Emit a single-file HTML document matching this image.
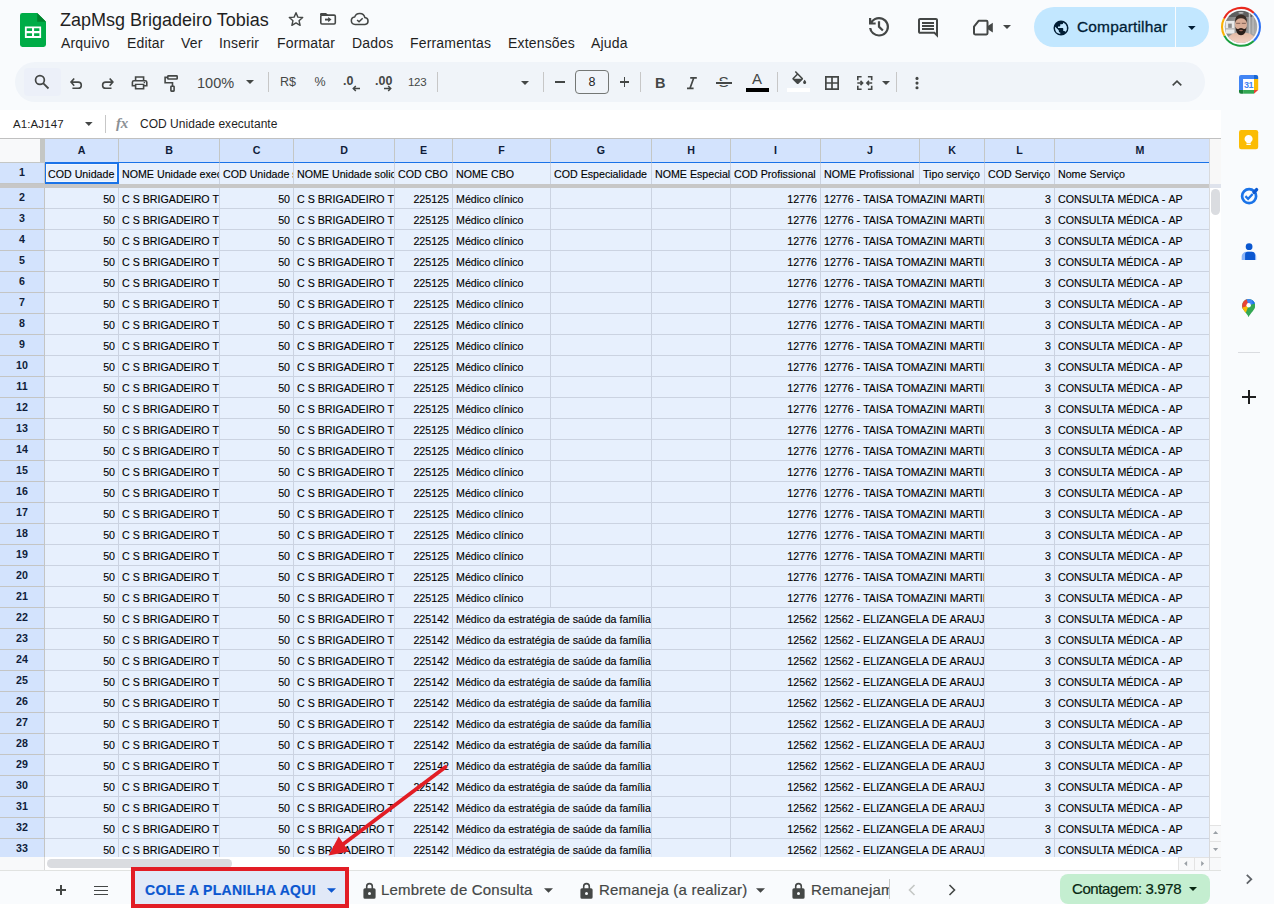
<!DOCTYPE html>
<html lang="pt-BR"><head><meta charset="utf-8"><title>ZapMsg Brigadeiro Tobias</title>
<style>
*{box-sizing:border-box;margin:0;padding:0}
html,body{width:1274px;height:908px;overflow:hidden;background:#f9fbfd;
  font-family:"Liberation Sans",sans-serif;color:#1f1f1f}
#app{position:relative;width:1274px;height:908px;overflow:hidden;background:#f9fbfd}
.abs{position:absolute}
svg{position:absolute;overflow:visible}
/* ---------- title / menu ---------- */
#title{position:absolute;left:60px;top:8px;font-size:18px;line-height:24px;color:#1f1f1f;white-space:nowrap;letter-spacing:0}
.menu{position:absolute;top:33px;font-size:14px;line-height:20px;color:#1f1f1f;white-space:nowrap;letter-spacing:0.17px}
/* ---------- toolbar ---------- */
#tb{position:absolute;left:15px;top:62px;width:1190px;height:40px;border-radius:20px;background:#f0f4f9}
#tbsearch{position:absolute;left:24px;top:68px;width:37px;height:28px;background:#ecf0f9;border-radius:4px}
.sep{position:absolute;top:72px;width:1px;height:20px;background:#c7c7c7}
.tbt{position:absolute;font-size:14px;color:#444746;white-space:nowrap;line-height:20px}
/* ---------- formula bar ---------- */
#fb{position:absolute;left:0;top:110px;width:1221px;height:29px;background:#fff}
/* ---------- grid ---------- */
#gridbg{position:absolute;left:0;top:139px;width:1221px;height:731px;background:#fff}
#sel{position:absolute;left:45px;top:163px;width:1164px;height:694px;background:#e7f0fd}
.ch{position:absolute;top:139px;height:24px;background:#d3e3fd;border-right:1px solid #c4c7c5;border-bottom:1px solid #1a73e8;
  font-size:10.67px;font-weight:bold;text-align:center;line-height:23px;color:#0f1d3a}
.rh{position:absolute;left:0;width:45px;background:#d3e3fd;border-right:1px solid #c4c5c4;border-bottom:1px solid #c4c5c4;
  font-size:10.67px;font-weight:bold;text-align:center;line-height:19px;color:#0f1d3a}
.c{position:absolute;overflow:hidden;white-space:nowrap;font-size:10.67px;line-height:21px;padding:1px 3px 0 3px;color:#000;-webkit-text-stroke:0.12px #000}
.c.r{text-align:right}
.s{font-kerning:none}
.hl{position:absolute;left:45px;width:1164px;height:1px;background:#cbd3e1}
.vl{position:absolute;width:1px;background:#cbd3e1}
/* ---------- bottom bar ---------- */
#bb{position:absolute;left:0;top:870px;width:1221px;height:38px;background:#f9fbfd;border-top:1px solid #e1e3e1}
.tab{position:absolute;top:880px;font-size:15px;line-height:20px;color:#444746;white-space:nowrap;letter-spacing:0.2px;-webkit-text-stroke:0.2px currentColor}
</style></head><body><div id="app">
<!-- ===== Sheets logo ===== -->
<svg style="left:20px;top:13px" width="26" height="34" viewBox="0 0 26 34">
  <path d="M2.400 0H17.200L26 8.800V31.600A2.400 2.400 0 0 1 23.600 34H2.400A2.400 2.400 0 0 1 0 31.600V2.400A2.400 2.400 0 0 1 2.400 0Z" fill="#00ac47"/>
  <path d="M17.200 0L26 8.800H17.200Z" fill="#00832d"/>
  <path d="M4.900 13.400H21.100V25H4.900Z M6.700 15.200V17.900H12V15.200Z M14.100 15.200V17.900H19.400V15.200Z M6.700 20.300V22.900H12V20.300Z M14.100 20.300V22.900H19.400V20.300Z" fill="#fff" fill-rule="evenodd"/>
</svg>

<!-- ===== title + doc icons ===== -->
<div id="title">ZapMsg Brigadeiro Tobias</div>
<!-- star -->
<svg style="left:287px;top:10px" width="18" height="18" viewBox="0 0 24 24"><path d="M12 3.600l2.500 5.900 6.400.55-4.850 4.200 1.450 6.250L12 17.200 6.500 20.500l1.450-6.250L3.100 10.050l6.400-.55z" fill="none" stroke="#444746" stroke-width="1.900" stroke-linejoin="round"/></svg>
<!-- move to folder -->
<svg style="left:318px;top:10px" width="20" height="17" viewBox="318 10 20 17"><rect x="320.800" y="15.100" width="14.500" height="8.900" rx="1.200" fill="none" stroke="#444746" stroke-width="1.600"/><path d="M320 15.300V14.300a1.200 1.200 0 0 1 1.200-1.200h4.600a1.200 1.200 0 0 1 .9.400l1.600 1.800z" fill="#444746"/><path d="M325 19.600h4" stroke="#444746" stroke-width="1.900"/><path d="M328.200 16.900l3.300 2.700-3.300 2.700z" fill="#444746"/></svg>
<!-- cloud done -->
<svg style="left:350.300px;top:12px" width="19.500" height="13.500" viewBox="0 0 28 20" preserveAspectRatio="none"><path d="M7.500 18.500a5.500 5.500 0 0 1-.8-10.950A7.500 7.500 0 0 1 21.300 8.200 5.200 5.200 0 0 1 21.500 18.500z" fill="none" stroke="#444746" stroke-width="2.200" stroke-linejoin="round"/><path d="M10.200 11.800l2.800 2.700 5.200-5.200" fill="none" stroke="#444746" stroke-width="2.200"/></svg>

<!-- ===== menus ===== -->
<div class="menu" style="left:61px">Arquivo</div>
<div class="menu" style="left:127px">Editar</div>
<div class="menu" style="left:181px">Ver</div>
<div class="menu" style="left:219px">Inserir</div>
<div class="menu" style="left:277px">Formatar</div>
<div class="menu" style="left:352px">Dados</div>
<div class="menu" style="left:410px">Ferramentas</div>
<div class="menu" style="left:508px">Extensões</div>
<div class="menu" style="left:591px">Ajuda</div>

<!-- ===== right-side actions ===== -->
<!-- history -->
<svg style="left:868.900px;top:17px" width="20" height="19.600" viewBox="120 -840 720 720" preserveAspectRatio="none"><path d="M480-120q-138 0-240.500-91.500T122-440h82q14 104 92.500 172T480-200q117 0 198.500-81.500T760-480q0-117-81.500-198.500T480-760q-69 0-129 32t-101 88h110v80H120v-240h80v94q51-64 124.500-99T480-840q75 0 140.500 28.500t114 77q48.500 48.500 77 114T840-480q0 75-28.500 140.500t-77 114q-48.500 48.500-114 77T480-120Zm112-192L440-464v-216h80v184l128 128-56 56Z" fill="#444746"/></svg>
<!-- comment -->
<svg style="left:918.200px;top:18px" width="20" height="19.800" viewBox="80 -880 800 800" preserveAspectRatio="none"><path d="M240-400h480v-80H240v80Zm0-120h480v-80H240v80Zm0-120h480v-80H240v80ZM880-80 720-240H160q-33 0-56.500-23.500T80-320v-480q0-33 23.500-56.500T160-880h640q33 0 56.500 23.500T880-800v720ZM160-320h594l46 45v-525H160v480Zm0 0v-480 480Z" fill="#444746"/></svg>
<!-- video -->
<svg style="left:0;top:0" width="1274" height="60" viewBox="0 0 1274 60"><path d="M978.600 20.800H986.400Q987.500 20.800 987.500 21.900V33.300Q987.500 34.400 986.400 34.400H975.100Q974 34.400 974 33.300V26.600Z" fill="none" stroke="#444746" stroke-width="2" stroke-linejoin="round"/><path d="M987.800 26L992.800 22.700V32.500L987.800 29.200Z" fill="#444746"/></svg>
<svg style="left:1003px;top:25px" width="8" height="4" viewBox="0 0 10 5"><path d="M0 0h10L5 5z" fill="#444746"/></svg>

<!-- share button -->
<div class="abs" style="left:1034px;top:7px;width:175px;height:40px;border-radius:20px;background:#c2e7ff"></div>
<div class="abs" style="left:1175px;top:7px;width:1px;height:40px;background:#f9fbfd"></div>
<svg style="left:1051.700px;top:18.700px" width="18" height="18" viewBox="0 0 24 24"><path d="M12 2a10 10 0 1 0 0 20 10 10 0 0 0 0-20zm-1 17.930A8 8 0 0 1 4 12c0-.620.080-1.210.210-1.790L9 15v1a2 2 0 0 0 2 2v1.930zm6.900-2.540A2 2 0 0 0 16 16h-1v-3a1 1 0 0 0-1-1H8v-2h2a1 1 0 0 0 1-1V7h2a2 2 0 0 0 2-2v-.410a7.990 7.990 0 0 1 2.900 12.800z" fill="#001d35"/></svg>
<div class="abs" style="left:1077px;top:17px;font-size:15.500px;line-height:20px;color:#001d35;white-space:nowrap;letter-spacing:0.150px;-webkit-text-stroke:0.300px #001d35">Compartilhar</div>
<svg style="left:1188.200px;top:26px" width="7.600" height="4" viewBox="0 0 10 5"><path d="M0 0h10L5 5z" fill="#001d35"/></svg>

<!-- avatar -->
<svg style="left:1210px;top:0" width="64" height="55" viewBox="0 0 1057 908">
  <defs>
    <clipPath id="avc"><circle cx="512.500" cy="443.500" r="268"/></clipPath>
    <linearGradient id="avbg" x1="0" y1="0" x2="1" y2="0.300"><stop offset="0" stop-color="#6e6e6e"/><stop offset="0.450" stop-color="#9a9a9a"/><stop offset="0.700" stop-color="#8d8d8d"/><stop offset="1" stop-color="#a9a9a9"/></linearGradient>
    <linearGradient id="avsk" x1="0" y1="0" x2="0" y2="1"><stop offset="0" stop-color="#e3b9a4"/><stop offset="1" stop-color="#f3d3c4"/></linearGradient>
  </defs>
  <g fill="none" stroke-width="34">
    <path d="M230.9 308.0A312.5 312.5 0 0 1 724.8 214.2" stroke="#e8281d"/>
    <path d="M724.8 214.2A312.5 312.5 0 0 1 721.6 675.7" stroke="#2d70f3"/>
    <path d="M721.6 675.7A312.5 312.5 0 0 1 235.3 587.8" stroke="#1a9f3f"/>
    <path d="M235.3 587.8A312.5 312.5 0 0 1 230.9 308.0" stroke="#fbb004"/>
  </g>
  <g clip-path="url(#avc)">
    <rect x="230" y="170" width="570" height="550" fill="url(#avbg)"/>
    <rect x="230" y="170" width="570" height="110" fill="#4a4a4a" opacity="0.700"/>
    <rect x="255" y="345" width="150" height="210" fill="#e9e9e9"/>
    <rect x="300" y="390" width="60" height="70" fill="#8c8c8c"/>
    <rect x="255" y="470" width="150" height="14" fill="#9a9a9a"/>
    <rect x="640" y="200" width="26" height="360" fill="#c4c4c4"/>
    <rect x="700" y="230" width="22" height="330" fill="#bdbdbd"/>
    <ellipse cx="512" cy="212" rx="45" ry="16" fill="#d8d8d8" opacity="0.800"/>
    <path d="M250 720Q300 560 430 540H600Q740 560 790 720Z" fill="url(#avsk)"/>
    <ellipse cx="512" cy="400" rx="98" ry="150" fill="#d9ad97"/>
    <path d="M412 380Q405 245 512 240Q620 245 612 380Q590 300 512 300Q434 300 412 380Z" fill="#3a2c25"/>
    <path d="M420 440Q430 580 512 582Q594 580 604 440Q585 500 545 470Q512 455 480 470Q440 500 420 440Z" fill="#2a1e19"/>
    <path d="M432 385H500M525 385H592" stroke="#5a4038" stroke-width="12" fill="none"/>
    <ellipse cx="512" cy="505" rx="32" ry="12" fill="#a06a5c"/>
  </g>
</svg>

<!-- ===== toolbar ===== -->
<div id="tb"></div>
<div id="tbsearch"></div>
<!-- search -->
<svg style="left:30px;top:70px" width="22" height="22" viewBox="30 70 22 22"><circle cx="39.950" cy="80" r="4.400" fill="none" stroke="#444746" stroke-width="1.700"/><path d="M43.100 83.200L48.500 88.500" stroke="#444746" stroke-width="1.800"/></svg>
<!-- undo / redo / paint format (page coords) -->
<svg style="left:0;top:0" width="1274" height="120" viewBox="0 0 1274 120">
  <g fill="none" stroke="#444746" stroke-width="1.600">
    <path d="M74.200 78.500L71 82.100L74.200 85.700M71.500 82.100H78.200A3.100 3.100 0 0 1 78.200 88.300H72.400"/>
    <path d="M109.700 78.500L112.900 82.100L109.700 85.700M112.400 82.100H105.700A3.100 3.100 0 0 0 105.700 88.300H111.500"/>
    <rect x="167.800" y="75.900" width="9.400" height="3.100" rx="0.600"/>
    <path d="M167.800 77.400H165.100V82.800H172.500V86"/>
    <rect x="170.900" y="86.300" width="3.200" height="4.800" rx="0.500"/>
  </g>
</svg>
<!-- print -->
<svg style="left:130.300px;top:74px" width="19.200" height="17.800" viewBox="0 0 24 24" preserveAspectRatio="none"><path d="M19 8h-1V3H6v5H5a3 3 0 0 0-3 3v6h4v4h12v-4h4v-6a3 3 0 0 0-3-3zM8 5h8v3H8V5zm8 14H8v-4h8v4zm2-4v-2H6v2H4v-4a1 1 0 0 1 1-1h14a1 1 0 0 1 1 1v4h-2z" fill="#444746"/><circle cx="18" cy="11.500" r="1" fill="#444746"/></svg>
<div class="tbt" style="left:197px;top:73px;font-size:14.500px">100%</div>
<svg style="left:246px;top:80px" width="8" height="4" viewBox="0 0 10 5"><path d="M0 0h10L5 5z" fill="#444746"/></svg>
<div class="sep" style="left:268px"></div>
<div class="tbt" style="left:280px;top:72px;font-size:12.500px">R$</div>
<div class="tbt" style="left:314.500px;top:72px;font-size:12.500px">%</div>
<div class="tbt" style="left:343px;top:70.500px;font-size:12.500px;font-weight:bold">.0</div>
<svg style="left:352px;top:84.500px" width="8" height="7" viewBox="0 0 8 7"><path d="M8 3.500H1.500M3.800 1L1.300 3.500 3.800 6" fill="none" stroke="#444746" stroke-width="1.500"/></svg>
<div class="tbt" style="left:375px;top:70.500px;font-size:12.500px;font-weight:bold">.00</div>
<svg style="left:384px;top:84.500px" width="8" height="7" viewBox="0 0 8 7"><path d="M0 3.500h6.500M4.200 1l2.500 2.500L4.200 6" fill="none" stroke="#444746" stroke-width="1.500"/></svg>
<div class="tbt" style="left:408px;top:71.500px;font-size:11.500px;letter-spacing:-0.300px">123</div>
<div class="sep" style="left:437px"></div>
<svg style="left:520.500px;top:80.500px" width="8" height="4" viewBox="0 0 10 5"><path d="M0 0h10L5 5z" fill="#444746"/></svg>
<div class="sep" style="left:543px"></div>
<div class="abs" style="left:555.300px;top:81.300px;width:9.600px;height:1.500px;background:#444746"></div>
<div class="abs" style="left:575px;top:70px;width:34px;height:24px;border:1px solid #747775;border-radius:4px;text-align:center;font-size:12.500px;line-height:22px;color:#1f1f1f">8</div>
<div class="abs" style="left:619.500px;top:81.300px;width:9.600px;height:1.500px;background:#444746"></div>
<div class="abs" style="left:623.550px;top:77.250px;width:1.500px;height:9.600px;background:#444746"></div>
<div class="sep" style="left:640px"></div>
<div class="tbt" style="left:655px;top:72.500px;font-size:14.500px;font-weight:bold">B</div>
<svg style="left:686px;top:76px" width="12" height="14" viewBox="686 76 12 14"><path d="M690.200 77.800H696.800M687 88.300H693.600M693.800 77.800L690 88.300" fill="none" stroke="#444746" stroke-width="1.700"/></svg>
<!-- strikethrough S -->
<div class="tbt" style="left:718.600px;top:71.500px;font-size:15.500px">S</div>
<div class="abs" style="left:716px;top:82px;width:16px;height:1.500px;background:#444746;box-shadow:0 -1px 0 #f0f4f9,0 1px 0 #f0f4f9"></div>
<!-- text colour -->
<div class="tbt" style="left:752px;top:69px;font-size:15px">A</div>
<div class="abs" style="left:746px;top:88px;width:23px;height:4px;background:#000"></div>
<div class="sep" style="left:777px"></div>
<!-- fill colour -->
<svg style="left:789.500px;top:71px" width="18.500" height="18.500" viewBox="0 0 24 24"><path d="M16.560 8.940L7.620 0 6.210 1.410l2.380 2.380-5.150 5.150a1.490 1.490 0 0 0 0 2.120l5.500 5.500c.290.290.680.440 1.060.440s.770-.150 1.060-.440l5.500-5.500c.590-.580.590-1.530 0-2.120zM5.210 10L10 5.210 14.790 10H5.210zM19 11.500s-2 2.170-2 3.500c0 1.100.9 2 2 2s2-.900 2-2c0-1.330-2-3.500-2-3.500z" fill="#444746"/></svg>
<div class="abs" style="left:787px;top:88px;width:23px;height:4px;background:#fff"></div>
<!-- borders -->
<svg style="left:825px;top:76px" width="14" height="14" viewBox="0 0 14 14"><path d="M.85 .85h12.300v12.300H.85zM7 .85v12.300M.85 7h12.300" fill="none" stroke="#444746" stroke-width="1.700"/></svg>
<!-- merge -->
<svg style="left:857px;top:76px" width="15.500" height="14" viewBox="0 0 15.500 14"><path d="M.8 4.200V.8H4.600M10.900 .8h3.800V4.200M.8 9.800v3.400H4.600M10.900 13.200h3.800V9.800" fill="none" stroke="#444746" stroke-width="1.600"/><path d="M.3 7h5.200M3.500 4.900L5.600 7 3.500 9.100M15.200 7H10M12 4.900L9.900 7 12 9.100" fill="none" stroke="#444746" stroke-width="1.600"/></svg>
<svg style="left:882.200px;top:81px" width="8" height="4" viewBox="0 0 10 5"><path d="M0 0h10L5 5z" fill="#444746"/></svg>
<div class="sep" style="left:896px"></div>
<!-- more -->
<svg style="left:915px;top:74px" width="4" height="18" viewBox="0 0 4 18"><circle cx="2" cy="4.400" r="1.550" fill="#444746"/><circle cx="2" cy="9.100" r="1.550" fill="#444746"/><circle cx="2" cy="13.800" r="1.550" fill="#444746"/></svg>
<!-- collapse caret -->
<svg style="left:1171px;top:79px" width="12" height="8" viewBox="0 0 12 8"><path d="M1.700 6.400l4.300-4.300 4.300 4.300" fill="none" stroke="#444746" stroke-width="1.600"/></svg>

<!-- ===== side panel icons ===== -->
<!-- calendar -->
<svg style="left:1239.100px;top:74.600px" width="19.200" height="18.700" viewBox="0 0 19.200 18.700">
  <path d="M0 4V2A2 2 0 0 1 2 0H15V4Z" fill="#4285f4"/>
  <path d="M15 0H17.200A2 2 0 0 1 19.200 2V4H15Z" fill="#1967d2"/>
  <rect x="0" y="4" width="4.200" height="11" fill="#4285f4"/>
  <rect x="15" y="4" width="4.200" height="11" fill="#fbbc04"/>
  <rect x="4.200" y="15" width="10.800" height="3.700" fill="#34a853"/>
  <path d="M0 15H4.200V18.700H2A2 2 0 0 1 0 16.700Z" fill="#188038"/>
  <path d="M15 15H19.200L15 18.700Z" fill="#ea4335"/>
  <rect x="4.200" y="4" width="10.800" height="11" fill="#fff"/>
  <text x="9.600" y="12.700" font-family="Liberation Sans, sans-serif" font-size="9" font-weight="bold" fill="#4285f4" text-anchor="middle" letter-spacing="-0.400">31</text>
</svg>
<!-- keep -->
<svg style="left:1239.300px;top:130.300px" width="19.200" height="19.200" viewBox="0 0 19.200 19.200">
  <rect x="0" y="0" width="19.200" height="19.200" rx="2.200" fill="#fbbc04"/>
  <path d="M9.600 4.900a4 4 0 0 0-2.100 7.400v0.900h4.200v-0.900A4 4 0 0 0 9.600 4.900z" fill="#fff"/>
  <rect x="7.400" y="13.800" width="4.400" height="1.300" rx="0.300" fill="#fff"/>
</svg>
<!-- tasks -->
<svg style="left:1239px;top:186px" width="22" height="20" viewBox="1239 186 22 20">
  <circle cx="1249.100" cy="196.200" r="7" fill="none" stroke="#1a73e8" stroke-width="2.700"/>
  <path d="M1245.400 196.200l2.700 2.600 4.600-4.800" fill="none" stroke="#1a73e8" stroke-width="2.300"/>
  <path d="M1254 192.300l2.600-2.700" stroke="#0b57d0" stroke-width="3.400" stroke-linecap="round"/>
</svg>
<!-- contacts -->
<svg style="left:1240px;top:242px" width="18" height="19" viewBox="1240 242 18 19">
  <circle cx="1249.100" cy="246.700" r="3.400" fill="#0b57d0"/>
  <path d="M1241.700 259.900V256.600A4.800 4.800 0 0 1 1246.500 251.800H1251.600A4.600 4.600 0 0 1 1256.200 256.400V259.900Z" fill="#8ab4f8"/>
  <path d="M1245.100 259.900V254.500A2.700 2.700 0 0 1 1247.800 251.800H1251.600A3.400 3.400 0 0 1 1255 255.200V259.900Z" fill="#0b57d0"/>
</svg>
<!-- maps -->
<svg style="left:1242.400px;top:298.800px" width="13.300" height="18.200" viewBox="0 0 16 22">
  <defs><clipPath id="pin"><path d="M8 0a8 8 0 0 0-8 8c0 5.500 6 9 8 14 2-5 8-8.500 8-14a8 8 0 0 0-8-8z"/></clipPath></defs>
  <g clip-path="url(#pin)">
    <rect x="0" y="0" width="16" height="22" fill="#34a853"/>
    <path d="M0 0h16v5L8 8 3 0z" fill="#4285f4"/>
    <path d="M0 0h5.500L8 8 0 13z" fill="#ea4335"/>
    <path d="M0 10.500L8 8l-3.500 9L0 14z" fill="#fbbc04"/>
    <path d="M12 0h4v5l-3 1.500z" fill="#1a73e8"/>
  </g>
  <circle cx="8" cy="7.600" r="2.700" fill="#fff"/>
</svg>
<div class="abs" style="left:1238px;top:352px;width:22px;height:1px;background:#dadce0"></div>
<!-- plus -->
<div class="abs" style="left:1242px;top:396px;width:14px;height:2px;background:#1f1f1f"></div>
<div class="abs" style="left:1248px;top:390px;width:2px;height:14px;background:#1f1f1f"></div>
<!-- side panel chevron -->
<svg style="left:1244px;top:872px" width="10" height="14" viewBox="0 0 10 14"><path d="M2.800 2.800l4.500 4.400L2.800 11.600" fill="none" stroke="#5f6368" stroke-width="1.800"/></svg>

<!-- ===== formula bar ===== -->
<div id="fb"></div>
<div class="abs" style="left:13px;top:114px;font-size:11.500px;line-height:20px;color:#1f1f1f;letter-spacing:0.100px">A1:AJ147</div>
<svg style="left:85.300px;top:122px" width="7.600" height="4" viewBox="0 0 10 5"><path d="M0 0h10L5 5z" fill="#444746"/></svg>
<div class="abs" style="left:105px;top:115px;width:1px;height:18px;background:#c7c7c7"></div>
<div class="abs" style="left:116px;top:113px;font-size:15px;line-height:20px;color:#8b9095;font-style:italic;font-weight:bold;font-family:'Liberation Serif',serif;letter-spacing:-0.300px">fx</div>
<div class="abs" style="left:140px;top:114px;font-size:12px;line-height:20px;color:#1f1f1f;white-space:nowrap;letter-spacing:0.030px">COD Unidade executante</div>

<div id="gridbg"></div><div id="sel"></div>
<div class="ch" style="left:45px;width:74px">A</div>
<div class="ch" style="left:119px;width:101px">B</div>
<div class="ch" style="left:220px;width:74px">C</div>
<div class="ch" style="left:294px;width:101px">D</div>
<div class="ch" style="left:395px;width:58px">E</div>
<div class="ch" style="left:453px;width:98px">F</div>
<div class="ch" style="left:551px;width:101px">G</div>
<div class="ch" style="left:652px;width:79px">H</div>
<div class="ch" style="left:731px;width:90px">I</div>
<div class="ch" style="left:821px;width:99px">J</div>
<div class="ch" style="left:920px;width:65px">K</div>
<div class="ch" style="left:985px;width:70px">L</div>
<div class="ch" style="left:1055px;width:155px;padding-left:16px">M</div>
<div class="c" style="left:45px;top:163px;width:73px;height:21px">COD Unidade executante</div>
<div class="c" style="left:119px;top:163px;width:100px;height:21px">NOME Unidade executante</div>
<div class="c" style="left:220px;top:163px;width:73px;height:21px">COD Unidade solicitante</div>
<div class="c" style="left:294px;top:163px;width:100px;height:21px">NOME Unidade solicitante</div>
<div class="c" style="left:395px;top:163px;width:57px;height:21px">COD CBO</div>
<div class="c" style="left:453px;top:163px;width:97px;height:21px">NOME CBO</div>
<div class="c" style="left:551px;top:163px;width:100px;height:21px">COD Especialidade</div>
<div class="c" style="left:652px;top:163px;width:78px;height:21px">NOME Especialidade</div>
<div class="c" style="left:731px;top:163px;width:89px;height:21px">COD Profissional</div>
<div class="c" style="left:821px;top:163px;width:98px;height:21px">NOME Profissional</div>
<div class="c" style="left:920px;top:163px;width:64px;height:21px">Tipo serviço</div>
<div class="c" style="left:985px;top:163px;width:69px;height:21px">COD Serviço</div>
<div class="c" style="left:1055px;top:163px;width:154px;height:21px">Nome Serviço</div>
<div class="vl" style="left:118px;top:163px;height:21px"></div>
<div class="vl" style="left:219px;top:163px;height:21px"></div>
<div class="vl" style="left:293px;top:163px;height:21px"></div>
<div class="vl" style="left:394px;top:163px;height:21px"></div>
<div class="vl" style="left:452px;top:163px;height:21px"></div>
<div class="vl" style="left:550px;top:163px;height:21px"></div>
<div class="vl" style="left:651px;top:163px;height:21px"></div>
<div class="vl" style="left:730px;top:163px;height:21px"></div>
<div class="vl" style="left:820px;top:163px;height:21px"></div>
<div class="vl" style="left:919px;top:163px;height:21px"></div>
<div class="vl" style="left:984px;top:163px;height:21px"></div>
<div class="vl" style="left:1054px;top:163px;height:21px"></div>
<div class="vl" style="left:1209px;top:163px;height:21px"></div>
<div class="rh" style="top:163px;height:21px">1</div>
<div class="rh" style="top:188px;height:21px">2</div>
<div class="c r" style="left:45px;top:188px;width:73px;height:21px">50</div>
<div class="c" style="left:119px;top:188px;width:100px;height:21px">C S BRIGADEIRO<span class="s"> </span>TOBIAS</div>
<div class="c r" style="left:220px;top:188px;width:73px;height:21px">50</div>
<div class="c" style="left:294px;top:188px;width:100px;height:21px">C S BRIGADEIRO<span class="s"> </span>TOBIAS</div>
<div class="c r" style="left:395px;top:188px;width:57px;height:21px">225125</div>
<div class="c" style="left:453px;top:188px;width:97px;height:21px">Médico clínico</div>
<div class="c r" style="left:731px;top:188px;width:89px;height:21px">12776</div>
<div class="c" style="left:821px;top:188px;width:163px;height:21px">12776 -<span class="s"> </span>TAISA<span class="s"> </span>TOMAZINI MARTINS</div>
<div class="c r" style="left:985px;top:188px;width:69px;height:21px">3</div>
<div class="c" style="left:1055px;top:188px;width:154px;height:21px">CONSULTA<span class="s"> </span>MÉDICA<span class="s"> </span>-<span class="s"> </span>AP</div>
<div class="hl" style="top:208px"></div>
<div class="vl" style="left:118px;top:188px;height:21px"></div>
<div class="vl" style="left:219px;top:188px;height:21px"></div>
<div class="vl" style="left:293px;top:188px;height:21px"></div>
<div class="vl" style="left:394px;top:188px;height:21px"></div>
<div class="vl" style="left:452px;top:188px;height:21px"></div>
<div class="vl" style="left:550px;top:188px;height:21px"></div>
<div class="vl" style="left:651px;top:188px;height:21px"></div>
<div class="vl" style="left:730px;top:188px;height:21px"></div>
<div class="vl" style="left:820px;top:188px;height:21px"></div>
<div class="vl" style="left:984px;top:188px;height:21px"></div>
<div class="vl" style="left:1054px;top:188px;height:21px"></div>
<div class="vl" style="left:1209px;top:188px;height:21px"></div>
<div class="rh" style="top:209px;height:21px">3</div>
<div class="c r" style="left:45px;top:209px;width:73px;height:21px">50</div>
<div class="c" style="left:119px;top:209px;width:100px;height:21px">C S BRIGADEIRO<span class="s"> </span>TOBIAS</div>
<div class="c r" style="left:220px;top:209px;width:73px;height:21px">50</div>
<div class="c" style="left:294px;top:209px;width:100px;height:21px">C S BRIGADEIRO<span class="s"> </span>TOBIAS</div>
<div class="c r" style="left:395px;top:209px;width:57px;height:21px">225125</div>
<div class="c" style="left:453px;top:209px;width:97px;height:21px">Médico clínico</div>
<div class="c r" style="left:731px;top:209px;width:89px;height:21px">12776</div>
<div class="c" style="left:821px;top:209px;width:163px;height:21px">12776 -<span class="s"> </span>TAISA<span class="s"> </span>TOMAZINI MARTINS</div>
<div class="c r" style="left:985px;top:209px;width:69px;height:21px">3</div>
<div class="c" style="left:1055px;top:209px;width:154px;height:21px">CONSULTA<span class="s"> </span>MÉDICA<span class="s"> </span>-<span class="s"> </span>AP</div>
<div class="hl" style="top:229px"></div>
<div class="vl" style="left:118px;top:209px;height:21px"></div>
<div class="vl" style="left:219px;top:209px;height:21px"></div>
<div class="vl" style="left:293px;top:209px;height:21px"></div>
<div class="vl" style="left:394px;top:209px;height:21px"></div>
<div class="vl" style="left:452px;top:209px;height:21px"></div>
<div class="vl" style="left:550px;top:209px;height:21px"></div>
<div class="vl" style="left:651px;top:209px;height:21px"></div>
<div class="vl" style="left:730px;top:209px;height:21px"></div>
<div class="vl" style="left:820px;top:209px;height:21px"></div>
<div class="vl" style="left:984px;top:209px;height:21px"></div>
<div class="vl" style="left:1054px;top:209px;height:21px"></div>
<div class="vl" style="left:1209px;top:209px;height:21px"></div>
<div class="rh" style="top:230px;height:21px">4</div>
<div class="c r" style="left:45px;top:230px;width:73px;height:21px">50</div>
<div class="c" style="left:119px;top:230px;width:100px;height:21px">C S BRIGADEIRO<span class="s"> </span>TOBIAS</div>
<div class="c r" style="left:220px;top:230px;width:73px;height:21px">50</div>
<div class="c" style="left:294px;top:230px;width:100px;height:21px">C S BRIGADEIRO<span class="s"> </span>TOBIAS</div>
<div class="c r" style="left:395px;top:230px;width:57px;height:21px">225125</div>
<div class="c" style="left:453px;top:230px;width:97px;height:21px">Médico clínico</div>
<div class="c r" style="left:731px;top:230px;width:89px;height:21px">12776</div>
<div class="c" style="left:821px;top:230px;width:163px;height:21px">12776 -<span class="s"> </span>TAISA<span class="s"> </span>TOMAZINI MARTINS</div>
<div class="c r" style="left:985px;top:230px;width:69px;height:21px">3</div>
<div class="c" style="left:1055px;top:230px;width:154px;height:21px">CONSULTA<span class="s"> </span>MÉDICA<span class="s"> </span>-<span class="s"> </span>AP</div>
<div class="hl" style="top:250px"></div>
<div class="vl" style="left:118px;top:230px;height:21px"></div>
<div class="vl" style="left:219px;top:230px;height:21px"></div>
<div class="vl" style="left:293px;top:230px;height:21px"></div>
<div class="vl" style="left:394px;top:230px;height:21px"></div>
<div class="vl" style="left:452px;top:230px;height:21px"></div>
<div class="vl" style="left:550px;top:230px;height:21px"></div>
<div class="vl" style="left:651px;top:230px;height:21px"></div>
<div class="vl" style="left:730px;top:230px;height:21px"></div>
<div class="vl" style="left:820px;top:230px;height:21px"></div>
<div class="vl" style="left:984px;top:230px;height:21px"></div>
<div class="vl" style="left:1054px;top:230px;height:21px"></div>
<div class="vl" style="left:1209px;top:230px;height:21px"></div>
<div class="rh" style="top:251px;height:21px">5</div>
<div class="c r" style="left:45px;top:251px;width:73px;height:21px">50</div>
<div class="c" style="left:119px;top:251px;width:100px;height:21px">C S BRIGADEIRO<span class="s"> </span>TOBIAS</div>
<div class="c r" style="left:220px;top:251px;width:73px;height:21px">50</div>
<div class="c" style="left:294px;top:251px;width:100px;height:21px">C S BRIGADEIRO<span class="s"> </span>TOBIAS</div>
<div class="c r" style="left:395px;top:251px;width:57px;height:21px">225125</div>
<div class="c" style="left:453px;top:251px;width:97px;height:21px">Médico clínico</div>
<div class="c r" style="left:731px;top:251px;width:89px;height:21px">12776</div>
<div class="c" style="left:821px;top:251px;width:163px;height:21px">12776 -<span class="s"> </span>TAISA<span class="s"> </span>TOMAZINI MARTINS</div>
<div class="c r" style="left:985px;top:251px;width:69px;height:21px">3</div>
<div class="c" style="left:1055px;top:251px;width:154px;height:21px">CONSULTA<span class="s"> </span>MÉDICA<span class="s"> </span>-<span class="s"> </span>AP</div>
<div class="hl" style="top:271px"></div>
<div class="vl" style="left:118px;top:251px;height:21px"></div>
<div class="vl" style="left:219px;top:251px;height:21px"></div>
<div class="vl" style="left:293px;top:251px;height:21px"></div>
<div class="vl" style="left:394px;top:251px;height:21px"></div>
<div class="vl" style="left:452px;top:251px;height:21px"></div>
<div class="vl" style="left:550px;top:251px;height:21px"></div>
<div class="vl" style="left:651px;top:251px;height:21px"></div>
<div class="vl" style="left:730px;top:251px;height:21px"></div>
<div class="vl" style="left:820px;top:251px;height:21px"></div>
<div class="vl" style="left:984px;top:251px;height:21px"></div>
<div class="vl" style="left:1054px;top:251px;height:21px"></div>
<div class="vl" style="left:1209px;top:251px;height:21px"></div>
<div class="rh" style="top:272px;height:21px">6</div>
<div class="c r" style="left:45px;top:272px;width:73px;height:21px">50</div>
<div class="c" style="left:119px;top:272px;width:100px;height:21px">C S BRIGADEIRO<span class="s"> </span>TOBIAS</div>
<div class="c r" style="left:220px;top:272px;width:73px;height:21px">50</div>
<div class="c" style="left:294px;top:272px;width:100px;height:21px">C S BRIGADEIRO<span class="s"> </span>TOBIAS</div>
<div class="c r" style="left:395px;top:272px;width:57px;height:21px">225125</div>
<div class="c" style="left:453px;top:272px;width:97px;height:21px">Médico clínico</div>
<div class="c r" style="left:731px;top:272px;width:89px;height:21px">12776</div>
<div class="c" style="left:821px;top:272px;width:163px;height:21px">12776 -<span class="s"> </span>TAISA<span class="s"> </span>TOMAZINI MARTINS</div>
<div class="c r" style="left:985px;top:272px;width:69px;height:21px">3</div>
<div class="c" style="left:1055px;top:272px;width:154px;height:21px">CONSULTA<span class="s"> </span>MÉDICA<span class="s"> </span>-<span class="s"> </span>AP</div>
<div class="hl" style="top:292px"></div>
<div class="vl" style="left:118px;top:272px;height:21px"></div>
<div class="vl" style="left:219px;top:272px;height:21px"></div>
<div class="vl" style="left:293px;top:272px;height:21px"></div>
<div class="vl" style="left:394px;top:272px;height:21px"></div>
<div class="vl" style="left:452px;top:272px;height:21px"></div>
<div class="vl" style="left:550px;top:272px;height:21px"></div>
<div class="vl" style="left:651px;top:272px;height:21px"></div>
<div class="vl" style="left:730px;top:272px;height:21px"></div>
<div class="vl" style="left:820px;top:272px;height:21px"></div>
<div class="vl" style="left:984px;top:272px;height:21px"></div>
<div class="vl" style="left:1054px;top:272px;height:21px"></div>
<div class="vl" style="left:1209px;top:272px;height:21px"></div>
<div class="rh" style="top:293px;height:21px">7</div>
<div class="c r" style="left:45px;top:293px;width:73px;height:21px">50</div>
<div class="c" style="left:119px;top:293px;width:100px;height:21px">C S BRIGADEIRO<span class="s"> </span>TOBIAS</div>
<div class="c r" style="left:220px;top:293px;width:73px;height:21px">50</div>
<div class="c" style="left:294px;top:293px;width:100px;height:21px">C S BRIGADEIRO<span class="s"> </span>TOBIAS</div>
<div class="c r" style="left:395px;top:293px;width:57px;height:21px">225125</div>
<div class="c" style="left:453px;top:293px;width:97px;height:21px">Médico clínico</div>
<div class="c r" style="left:731px;top:293px;width:89px;height:21px">12776</div>
<div class="c" style="left:821px;top:293px;width:163px;height:21px">12776 -<span class="s"> </span>TAISA<span class="s"> </span>TOMAZINI MARTINS</div>
<div class="c r" style="left:985px;top:293px;width:69px;height:21px">3</div>
<div class="c" style="left:1055px;top:293px;width:154px;height:21px">CONSULTA<span class="s"> </span>MÉDICA<span class="s"> </span>-<span class="s"> </span>AP</div>
<div class="hl" style="top:313px"></div>
<div class="vl" style="left:118px;top:293px;height:21px"></div>
<div class="vl" style="left:219px;top:293px;height:21px"></div>
<div class="vl" style="left:293px;top:293px;height:21px"></div>
<div class="vl" style="left:394px;top:293px;height:21px"></div>
<div class="vl" style="left:452px;top:293px;height:21px"></div>
<div class="vl" style="left:550px;top:293px;height:21px"></div>
<div class="vl" style="left:651px;top:293px;height:21px"></div>
<div class="vl" style="left:730px;top:293px;height:21px"></div>
<div class="vl" style="left:820px;top:293px;height:21px"></div>
<div class="vl" style="left:984px;top:293px;height:21px"></div>
<div class="vl" style="left:1054px;top:293px;height:21px"></div>
<div class="vl" style="left:1209px;top:293px;height:21px"></div>
<div class="rh" style="top:314px;height:21px">8</div>
<div class="c r" style="left:45px;top:314px;width:73px;height:21px">50</div>
<div class="c" style="left:119px;top:314px;width:100px;height:21px">C S BRIGADEIRO<span class="s"> </span>TOBIAS</div>
<div class="c r" style="left:220px;top:314px;width:73px;height:21px">50</div>
<div class="c" style="left:294px;top:314px;width:100px;height:21px">C S BRIGADEIRO<span class="s"> </span>TOBIAS</div>
<div class="c r" style="left:395px;top:314px;width:57px;height:21px">225125</div>
<div class="c" style="left:453px;top:314px;width:97px;height:21px">Médico clínico</div>
<div class="c r" style="left:731px;top:314px;width:89px;height:21px">12776</div>
<div class="c" style="left:821px;top:314px;width:163px;height:21px">12776 -<span class="s"> </span>TAISA<span class="s"> </span>TOMAZINI MARTINS</div>
<div class="c r" style="left:985px;top:314px;width:69px;height:21px">3</div>
<div class="c" style="left:1055px;top:314px;width:154px;height:21px">CONSULTA<span class="s"> </span>MÉDICA<span class="s"> </span>-<span class="s"> </span>AP</div>
<div class="hl" style="top:334px"></div>
<div class="vl" style="left:118px;top:314px;height:21px"></div>
<div class="vl" style="left:219px;top:314px;height:21px"></div>
<div class="vl" style="left:293px;top:314px;height:21px"></div>
<div class="vl" style="left:394px;top:314px;height:21px"></div>
<div class="vl" style="left:452px;top:314px;height:21px"></div>
<div class="vl" style="left:550px;top:314px;height:21px"></div>
<div class="vl" style="left:651px;top:314px;height:21px"></div>
<div class="vl" style="left:730px;top:314px;height:21px"></div>
<div class="vl" style="left:820px;top:314px;height:21px"></div>
<div class="vl" style="left:984px;top:314px;height:21px"></div>
<div class="vl" style="left:1054px;top:314px;height:21px"></div>
<div class="vl" style="left:1209px;top:314px;height:21px"></div>
<div class="rh" style="top:335px;height:21px">9</div>
<div class="c r" style="left:45px;top:335px;width:73px;height:21px">50</div>
<div class="c" style="left:119px;top:335px;width:100px;height:21px">C S BRIGADEIRO<span class="s"> </span>TOBIAS</div>
<div class="c r" style="left:220px;top:335px;width:73px;height:21px">50</div>
<div class="c" style="left:294px;top:335px;width:100px;height:21px">C S BRIGADEIRO<span class="s"> </span>TOBIAS</div>
<div class="c r" style="left:395px;top:335px;width:57px;height:21px">225125</div>
<div class="c" style="left:453px;top:335px;width:97px;height:21px">Médico clínico</div>
<div class="c r" style="left:731px;top:335px;width:89px;height:21px">12776</div>
<div class="c" style="left:821px;top:335px;width:163px;height:21px">12776 -<span class="s"> </span>TAISA<span class="s"> </span>TOMAZINI MARTINS</div>
<div class="c r" style="left:985px;top:335px;width:69px;height:21px">3</div>
<div class="c" style="left:1055px;top:335px;width:154px;height:21px">CONSULTA<span class="s"> </span>MÉDICA<span class="s"> </span>-<span class="s"> </span>AP</div>
<div class="hl" style="top:355px"></div>
<div class="vl" style="left:118px;top:335px;height:21px"></div>
<div class="vl" style="left:219px;top:335px;height:21px"></div>
<div class="vl" style="left:293px;top:335px;height:21px"></div>
<div class="vl" style="left:394px;top:335px;height:21px"></div>
<div class="vl" style="left:452px;top:335px;height:21px"></div>
<div class="vl" style="left:550px;top:335px;height:21px"></div>
<div class="vl" style="left:651px;top:335px;height:21px"></div>
<div class="vl" style="left:730px;top:335px;height:21px"></div>
<div class="vl" style="left:820px;top:335px;height:21px"></div>
<div class="vl" style="left:984px;top:335px;height:21px"></div>
<div class="vl" style="left:1054px;top:335px;height:21px"></div>
<div class="vl" style="left:1209px;top:335px;height:21px"></div>
<div class="rh" style="top:356px;height:21px">10</div>
<div class="c r" style="left:45px;top:356px;width:73px;height:21px">50</div>
<div class="c" style="left:119px;top:356px;width:100px;height:21px">C S BRIGADEIRO<span class="s"> </span>TOBIAS</div>
<div class="c r" style="left:220px;top:356px;width:73px;height:21px">50</div>
<div class="c" style="left:294px;top:356px;width:100px;height:21px">C S BRIGADEIRO<span class="s"> </span>TOBIAS</div>
<div class="c r" style="left:395px;top:356px;width:57px;height:21px">225125</div>
<div class="c" style="left:453px;top:356px;width:97px;height:21px">Médico clínico</div>
<div class="c r" style="left:731px;top:356px;width:89px;height:21px">12776</div>
<div class="c" style="left:821px;top:356px;width:163px;height:21px">12776 -<span class="s"> </span>TAISA<span class="s"> </span>TOMAZINI MARTINS</div>
<div class="c r" style="left:985px;top:356px;width:69px;height:21px">3</div>
<div class="c" style="left:1055px;top:356px;width:154px;height:21px">CONSULTA<span class="s"> </span>MÉDICA<span class="s"> </span>-<span class="s"> </span>AP</div>
<div class="hl" style="top:376px"></div>
<div class="vl" style="left:118px;top:356px;height:21px"></div>
<div class="vl" style="left:219px;top:356px;height:21px"></div>
<div class="vl" style="left:293px;top:356px;height:21px"></div>
<div class="vl" style="left:394px;top:356px;height:21px"></div>
<div class="vl" style="left:452px;top:356px;height:21px"></div>
<div class="vl" style="left:550px;top:356px;height:21px"></div>
<div class="vl" style="left:651px;top:356px;height:21px"></div>
<div class="vl" style="left:730px;top:356px;height:21px"></div>
<div class="vl" style="left:820px;top:356px;height:21px"></div>
<div class="vl" style="left:984px;top:356px;height:21px"></div>
<div class="vl" style="left:1054px;top:356px;height:21px"></div>
<div class="vl" style="left:1209px;top:356px;height:21px"></div>
<div class="rh" style="top:377px;height:21px">11</div>
<div class="c r" style="left:45px;top:377px;width:73px;height:21px">50</div>
<div class="c" style="left:119px;top:377px;width:100px;height:21px">C S BRIGADEIRO<span class="s"> </span>TOBIAS</div>
<div class="c r" style="left:220px;top:377px;width:73px;height:21px">50</div>
<div class="c" style="left:294px;top:377px;width:100px;height:21px">C S BRIGADEIRO<span class="s"> </span>TOBIAS</div>
<div class="c r" style="left:395px;top:377px;width:57px;height:21px">225125</div>
<div class="c" style="left:453px;top:377px;width:97px;height:21px">Médico clínico</div>
<div class="c r" style="left:731px;top:377px;width:89px;height:21px">12776</div>
<div class="c" style="left:821px;top:377px;width:163px;height:21px">12776 -<span class="s"> </span>TAISA<span class="s"> </span>TOMAZINI MARTINS</div>
<div class="c r" style="left:985px;top:377px;width:69px;height:21px">3</div>
<div class="c" style="left:1055px;top:377px;width:154px;height:21px">CONSULTA<span class="s"> </span>MÉDICA<span class="s"> </span>-<span class="s"> </span>AP</div>
<div class="hl" style="top:397px"></div>
<div class="vl" style="left:118px;top:377px;height:21px"></div>
<div class="vl" style="left:219px;top:377px;height:21px"></div>
<div class="vl" style="left:293px;top:377px;height:21px"></div>
<div class="vl" style="left:394px;top:377px;height:21px"></div>
<div class="vl" style="left:452px;top:377px;height:21px"></div>
<div class="vl" style="left:550px;top:377px;height:21px"></div>
<div class="vl" style="left:651px;top:377px;height:21px"></div>
<div class="vl" style="left:730px;top:377px;height:21px"></div>
<div class="vl" style="left:820px;top:377px;height:21px"></div>
<div class="vl" style="left:984px;top:377px;height:21px"></div>
<div class="vl" style="left:1054px;top:377px;height:21px"></div>
<div class="vl" style="left:1209px;top:377px;height:21px"></div>
<div class="rh" style="top:398px;height:21px">12</div>
<div class="c r" style="left:45px;top:398px;width:73px;height:21px">50</div>
<div class="c" style="left:119px;top:398px;width:100px;height:21px">C S BRIGADEIRO<span class="s"> </span>TOBIAS</div>
<div class="c r" style="left:220px;top:398px;width:73px;height:21px">50</div>
<div class="c" style="left:294px;top:398px;width:100px;height:21px">C S BRIGADEIRO<span class="s"> </span>TOBIAS</div>
<div class="c r" style="left:395px;top:398px;width:57px;height:21px">225125</div>
<div class="c" style="left:453px;top:398px;width:97px;height:21px">Médico clínico</div>
<div class="c r" style="left:731px;top:398px;width:89px;height:21px">12776</div>
<div class="c" style="left:821px;top:398px;width:163px;height:21px">12776 -<span class="s"> </span>TAISA<span class="s"> </span>TOMAZINI MARTINS</div>
<div class="c r" style="left:985px;top:398px;width:69px;height:21px">3</div>
<div class="c" style="left:1055px;top:398px;width:154px;height:21px">CONSULTA<span class="s"> </span>MÉDICA<span class="s"> </span>-<span class="s"> </span>AP</div>
<div class="hl" style="top:418px"></div>
<div class="vl" style="left:118px;top:398px;height:21px"></div>
<div class="vl" style="left:219px;top:398px;height:21px"></div>
<div class="vl" style="left:293px;top:398px;height:21px"></div>
<div class="vl" style="left:394px;top:398px;height:21px"></div>
<div class="vl" style="left:452px;top:398px;height:21px"></div>
<div class="vl" style="left:550px;top:398px;height:21px"></div>
<div class="vl" style="left:651px;top:398px;height:21px"></div>
<div class="vl" style="left:730px;top:398px;height:21px"></div>
<div class="vl" style="left:820px;top:398px;height:21px"></div>
<div class="vl" style="left:984px;top:398px;height:21px"></div>
<div class="vl" style="left:1054px;top:398px;height:21px"></div>
<div class="vl" style="left:1209px;top:398px;height:21px"></div>
<div class="rh" style="top:419px;height:21px">13</div>
<div class="c r" style="left:45px;top:419px;width:73px;height:21px">50</div>
<div class="c" style="left:119px;top:419px;width:100px;height:21px">C S BRIGADEIRO<span class="s"> </span>TOBIAS</div>
<div class="c r" style="left:220px;top:419px;width:73px;height:21px">50</div>
<div class="c" style="left:294px;top:419px;width:100px;height:21px">C S BRIGADEIRO<span class="s"> </span>TOBIAS</div>
<div class="c r" style="left:395px;top:419px;width:57px;height:21px">225125</div>
<div class="c" style="left:453px;top:419px;width:97px;height:21px">Médico clínico</div>
<div class="c r" style="left:731px;top:419px;width:89px;height:21px">12776</div>
<div class="c" style="left:821px;top:419px;width:163px;height:21px">12776 -<span class="s"> </span>TAISA<span class="s"> </span>TOMAZINI MARTINS</div>
<div class="c r" style="left:985px;top:419px;width:69px;height:21px">3</div>
<div class="c" style="left:1055px;top:419px;width:154px;height:21px">CONSULTA<span class="s"> </span>MÉDICA<span class="s"> </span>-<span class="s"> </span>AP</div>
<div class="hl" style="top:439px"></div>
<div class="vl" style="left:118px;top:419px;height:21px"></div>
<div class="vl" style="left:219px;top:419px;height:21px"></div>
<div class="vl" style="left:293px;top:419px;height:21px"></div>
<div class="vl" style="left:394px;top:419px;height:21px"></div>
<div class="vl" style="left:452px;top:419px;height:21px"></div>
<div class="vl" style="left:550px;top:419px;height:21px"></div>
<div class="vl" style="left:651px;top:419px;height:21px"></div>
<div class="vl" style="left:730px;top:419px;height:21px"></div>
<div class="vl" style="left:820px;top:419px;height:21px"></div>
<div class="vl" style="left:984px;top:419px;height:21px"></div>
<div class="vl" style="left:1054px;top:419px;height:21px"></div>
<div class="vl" style="left:1209px;top:419px;height:21px"></div>
<div class="rh" style="top:440px;height:21px">14</div>
<div class="c r" style="left:45px;top:440px;width:73px;height:21px">50</div>
<div class="c" style="left:119px;top:440px;width:100px;height:21px">C S BRIGADEIRO<span class="s"> </span>TOBIAS</div>
<div class="c r" style="left:220px;top:440px;width:73px;height:21px">50</div>
<div class="c" style="left:294px;top:440px;width:100px;height:21px">C S BRIGADEIRO<span class="s"> </span>TOBIAS</div>
<div class="c r" style="left:395px;top:440px;width:57px;height:21px">225125</div>
<div class="c" style="left:453px;top:440px;width:97px;height:21px">Médico clínico</div>
<div class="c r" style="left:731px;top:440px;width:89px;height:21px">12776</div>
<div class="c" style="left:821px;top:440px;width:163px;height:21px">12776 -<span class="s"> </span>TAISA<span class="s"> </span>TOMAZINI MARTINS</div>
<div class="c r" style="left:985px;top:440px;width:69px;height:21px">3</div>
<div class="c" style="left:1055px;top:440px;width:154px;height:21px">CONSULTA<span class="s"> </span>MÉDICA<span class="s"> </span>-<span class="s"> </span>AP</div>
<div class="hl" style="top:460px"></div>
<div class="vl" style="left:118px;top:440px;height:21px"></div>
<div class="vl" style="left:219px;top:440px;height:21px"></div>
<div class="vl" style="left:293px;top:440px;height:21px"></div>
<div class="vl" style="left:394px;top:440px;height:21px"></div>
<div class="vl" style="left:452px;top:440px;height:21px"></div>
<div class="vl" style="left:550px;top:440px;height:21px"></div>
<div class="vl" style="left:651px;top:440px;height:21px"></div>
<div class="vl" style="left:730px;top:440px;height:21px"></div>
<div class="vl" style="left:820px;top:440px;height:21px"></div>
<div class="vl" style="left:984px;top:440px;height:21px"></div>
<div class="vl" style="left:1054px;top:440px;height:21px"></div>
<div class="vl" style="left:1209px;top:440px;height:21px"></div>
<div class="rh" style="top:461px;height:21px">15</div>
<div class="c r" style="left:45px;top:461px;width:73px;height:21px">50</div>
<div class="c" style="left:119px;top:461px;width:100px;height:21px">C S BRIGADEIRO<span class="s"> </span>TOBIAS</div>
<div class="c r" style="left:220px;top:461px;width:73px;height:21px">50</div>
<div class="c" style="left:294px;top:461px;width:100px;height:21px">C S BRIGADEIRO<span class="s"> </span>TOBIAS</div>
<div class="c r" style="left:395px;top:461px;width:57px;height:21px">225125</div>
<div class="c" style="left:453px;top:461px;width:97px;height:21px">Médico clínico</div>
<div class="c r" style="left:731px;top:461px;width:89px;height:21px">12776</div>
<div class="c" style="left:821px;top:461px;width:163px;height:21px">12776 -<span class="s"> </span>TAISA<span class="s"> </span>TOMAZINI MARTINS</div>
<div class="c r" style="left:985px;top:461px;width:69px;height:21px">3</div>
<div class="c" style="left:1055px;top:461px;width:154px;height:21px">CONSULTA<span class="s"> </span>MÉDICA<span class="s"> </span>-<span class="s"> </span>AP</div>
<div class="hl" style="top:481px"></div>
<div class="vl" style="left:118px;top:461px;height:21px"></div>
<div class="vl" style="left:219px;top:461px;height:21px"></div>
<div class="vl" style="left:293px;top:461px;height:21px"></div>
<div class="vl" style="left:394px;top:461px;height:21px"></div>
<div class="vl" style="left:452px;top:461px;height:21px"></div>
<div class="vl" style="left:550px;top:461px;height:21px"></div>
<div class="vl" style="left:651px;top:461px;height:21px"></div>
<div class="vl" style="left:730px;top:461px;height:21px"></div>
<div class="vl" style="left:820px;top:461px;height:21px"></div>
<div class="vl" style="left:984px;top:461px;height:21px"></div>
<div class="vl" style="left:1054px;top:461px;height:21px"></div>
<div class="vl" style="left:1209px;top:461px;height:21px"></div>
<div class="rh" style="top:482px;height:21px">16</div>
<div class="c r" style="left:45px;top:482px;width:73px;height:21px">50</div>
<div class="c" style="left:119px;top:482px;width:100px;height:21px">C S BRIGADEIRO<span class="s"> </span>TOBIAS</div>
<div class="c r" style="left:220px;top:482px;width:73px;height:21px">50</div>
<div class="c" style="left:294px;top:482px;width:100px;height:21px">C S BRIGADEIRO<span class="s"> </span>TOBIAS</div>
<div class="c r" style="left:395px;top:482px;width:57px;height:21px">225125</div>
<div class="c" style="left:453px;top:482px;width:97px;height:21px">Médico clínico</div>
<div class="c r" style="left:731px;top:482px;width:89px;height:21px">12776</div>
<div class="c" style="left:821px;top:482px;width:163px;height:21px">12776 -<span class="s"> </span>TAISA<span class="s"> </span>TOMAZINI MARTINS</div>
<div class="c r" style="left:985px;top:482px;width:69px;height:21px">3</div>
<div class="c" style="left:1055px;top:482px;width:154px;height:21px">CONSULTA<span class="s"> </span>MÉDICA<span class="s"> </span>-<span class="s"> </span>AP</div>
<div class="hl" style="top:502px"></div>
<div class="vl" style="left:118px;top:482px;height:21px"></div>
<div class="vl" style="left:219px;top:482px;height:21px"></div>
<div class="vl" style="left:293px;top:482px;height:21px"></div>
<div class="vl" style="left:394px;top:482px;height:21px"></div>
<div class="vl" style="left:452px;top:482px;height:21px"></div>
<div class="vl" style="left:550px;top:482px;height:21px"></div>
<div class="vl" style="left:651px;top:482px;height:21px"></div>
<div class="vl" style="left:730px;top:482px;height:21px"></div>
<div class="vl" style="left:820px;top:482px;height:21px"></div>
<div class="vl" style="left:984px;top:482px;height:21px"></div>
<div class="vl" style="left:1054px;top:482px;height:21px"></div>
<div class="vl" style="left:1209px;top:482px;height:21px"></div>
<div class="rh" style="top:503px;height:21px">17</div>
<div class="c r" style="left:45px;top:503px;width:73px;height:21px">50</div>
<div class="c" style="left:119px;top:503px;width:100px;height:21px">C S BRIGADEIRO<span class="s"> </span>TOBIAS</div>
<div class="c r" style="left:220px;top:503px;width:73px;height:21px">50</div>
<div class="c" style="left:294px;top:503px;width:100px;height:21px">C S BRIGADEIRO<span class="s"> </span>TOBIAS</div>
<div class="c r" style="left:395px;top:503px;width:57px;height:21px">225125</div>
<div class="c" style="left:453px;top:503px;width:97px;height:21px">Médico clínico</div>
<div class="c r" style="left:731px;top:503px;width:89px;height:21px">12776</div>
<div class="c" style="left:821px;top:503px;width:163px;height:21px">12776 -<span class="s"> </span>TAISA<span class="s"> </span>TOMAZINI MARTINS</div>
<div class="c r" style="left:985px;top:503px;width:69px;height:21px">3</div>
<div class="c" style="left:1055px;top:503px;width:154px;height:21px">CONSULTA<span class="s"> </span>MÉDICA<span class="s"> </span>-<span class="s"> </span>AP</div>
<div class="hl" style="top:523px"></div>
<div class="vl" style="left:118px;top:503px;height:21px"></div>
<div class="vl" style="left:219px;top:503px;height:21px"></div>
<div class="vl" style="left:293px;top:503px;height:21px"></div>
<div class="vl" style="left:394px;top:503px;height:21px"></div>
<div class="vl" style="left:452px;top:503px;height:21px"></div>
<div class="vl" style="left:550px;top:503px;height:21px"></div>
<div class="vl" style="left:651px;top:503px;height:21px"></div>
<div class="vl" style="left:730px;top:503px;height:21px"></div>
<div class="vl" style="left:820px;top:503px;height:21px"></div>
<div class="vl" style="left:984px;top:503px;height:21px"></div>
<div class="vl" style="left:1054px;top:503px;height:21px"></div>
<div class="vl" style="left:1209px;top:503px;height:21px"></div>
<div class="rh" style="top:524px;height:21px">18</div>
<div class="c r" style="left:45px;top:524px;width:73px;height:21px">50</div>
<div class="c" style="left:119px;top:524px;width:100px;height:21px">C S BRIGADEIRO<span class="s"> </span>TOBIAS</div>
<div class="c r" style="left:220px;top:524px;width:73px;height:21px">50</div>
<div class="c" style="left:294px;top:524px;width:100px;height:21px">C S BRIGADEIRO<span class="s"> </span>TOBIAS</div>
<div class="c r" style="left:395px;top:524px;width:57px;height:21px">225125</div>
<div class="c" style="left:453px;top:524px;width:97px;height:21px">Médico clínico</div>
<div class="c r" style="left:731px;top:524px;width:89px;height:21px">12776</div>
<div class="c" style="left:821px;top:524px;width:163px;height:21px">12776 -<span class="s"> </span>TAISA<span class="s"> </span>TOMAZINI MARTINS</div>
<div class="c r" style="left:985px;top:524px;width:69px;height:21px">3</div>
<div class="c" style="left:1055px;top:524px;width:154px;height:21px">CONSULTA<span class="s"> </span>MÉDICA<span class="s"> </span>-<span class="s"> </span>AP</div>
<div class="hl" style="top:544px"></div>
<div class="vl" style="left:118px;top:524px;height:21px"></div>
<div class="vl" style="left:219px;top:524px;height:21px"></div>
<div class="vl" style="left:293px;top:524px;height:21px"></div>
<div class="vl" style="left:394px;top:524px;height:21px"></div>
<div class="vl" style="left:452px;top:524px;height:21px"></div>
<div class="vl" style="left:550px;top:524px;height:21px"></div>
<div class="vl" style="left:651px;top:524px;height:21px"></div>
<div class="vl" style="left:730px;top:524px;height:21px"></div>
<div class="vl" style="left:820px;top:524px;height:21px"></div>
<div class="vl" style="left:984px;top:524px;height:21px"></div>
<div class="vl" style="left:1054px;top:524px;height:21px"></div>
<div class="vl" style="left:1209px;top:524px;height:21px"></div>
<div class="rh" style="top:545px;height:21px">19</div>
<div class="c r" style="left:45px;top:545px;width:73px;height:21px">50</div>
<div class="c" style="left:119px;top:545px;width:100px;height:21px">C S BRIGADEIRO<span class="s"> </span>TOBIAS</div>
<div class="c r" style="left:220px;top:545px;width:73px;height:21px">50</div>
<div class="c" style="left:294px;top:545px;width:100px;height:21px">C S BRIGADEIRO<span class="s"> </span>TOBIAS</div>
<div class="c r" style="left:395px;top:545px;width:57px;height:21px">225125</div>
<div class="c" style="left:453px;top:545px;width:97px;height:21px">Médico clínico</div>
<div class="c r" style="left:731px;top:545px;width:89px;height:21px">12776</div>
<div class="c" style="left:821px;top:545px;width:163px;height:21px">12776 -<span class="s"> </span>TAISA<span class="s"> </span>TOMAZINI MARTINS</div>
<div class="c r" style="left:985px;top:545px;width:69px;height:21px">3</div>
<div class="c" style="left:1055px;top:545px;width:154px;height:21px">CONSULTA<span class="s"> </span>MÉDICA<span class="s"> </span>-<span class="s"> </span>AP</div>
<div class="hl" style="top:565px"></div>
<div class="vl" style="left:118px;top:545px;height:21px"></div>
<div class="vl" style="left:219px;top:545px;height:21px"></div>
<div class="vl" style="left:293px;top:545px;height:21px"></div>
<div class="vl" style="left:394px;top:545px;height:21px"></div>
<div class="vl" style="left:452px;top:545px;height:21px"></div>
<div class="vl" style="left:550px;top:545px;height:21px"></div>
<div class="vl" style="left:651px;top:545px;height:21px"></div>
<div class="vl" style="left:730px;top:545px;height:21px"></div>
<div class="vl" style="left:820px;top:545px;height:21px"></div>
<div class="vl" style="left:984px;top:545px;height:21px"></div>
<div class="vl" style="left:1054px;top:545px;height:21px"></div>
<div class="vl" style="left:1209px;top:545px;height:21px"></div>
<div class="rh" style="top:566px;height:21px">20</div>
<div class="c r" style="left:45px;top:566px;width:73px;height:21px">50</div>
<div class="c" style="left:119px;top:566px;width:100px;height:21px">C S BRIGADEIRO<span class="s"> </span>TOBIAS</div>
<div class="c r" style="left:220px;top:566px;width:73px;height:21px">50</div>
<div class="c" style="left:294px;top:566px;width:100px;height:21px">C S BRIGADEIRO<span class="s"> </span>TOBIAS</div>
<div class="c r" style="left:395px;top:566px;width:57px;height:21px">225125</div>
<div class="c" style="left:453px;top:566px;width:97px;height:21px">Médico clínico</div>
<div class="c r" style="left:731px;top:566px;width:89px;height:21px">12776</div>
<div class="c" style="left:821px;top:566px;width:163px;height:21px">12776 -<span class="s"> </span>TAISA<span class="s"> </span>TOMAZINI MARTINS</div>
<div class="c r" style="left:985px;top:566px;width:69px;height:21px">3</div>
<div class="c" style="left:1055px;top:566px;width:154px;height:21px">CONSULTA<span class="s"> </span>MÉDICA<span class="s"> </span>-<span class="s"> </span>AP</div>
<div class="hl" style="top:586px"></div>
<div class="vl" style="left:118px;top:566px;height:21px"></div>
<div class="vl" style="left:219px;top:566px;height:21px"></div>
<div class="vl" style="left:293px;top:566px;height:21px"></div>
<div class="vl" style="left:394px;top:566px;height:21px"></div>
<div class="vl" style="left:452px;top:566px;height:21px"></div>
<div class="vl" style="left:550px;top:566px;height:21px"></div>
<div class="vl" style="left:651px;top:566px;height:21px"></div>
<div class="vl" style="left:730px;top:566px;height:21px"></div>
<div class="vl" style="left:820px;top:566px;height:21px"></div>
<div class="vl" style="left:984px;top:566px;height:21px"></div>
<div class="vl" style="left:1054px;top:566px;height:21px"></div>
<div class="vl" style="left:1209px;top:566px;height:21px"></div>
<div class="rh" style="top:587px;height:21px">21</div>
<div class="c r" style="left:45px;top:587px;width:73px;height:21px">50</div>
<div class="c" style="left:119px;top:587px;width:100px;height:21px">C S BRIGADEIRO<span class="s"> </span>TOBIAS</div>
<div class="c r" style="left:220px;top:587px;width:73px;height:21px">50</div>
<div class="c" style="left:294px;top:587px;width:100px;height:21px">C S BRIGADEIRO<span class="s"> </span>TOBIAS</div>
<div class="c r" style="left:395px;top:587px;width:57px;height:21px">225125</div>
<div class="c" style="left:453px;top:587px;width:97px;height:21px">Médico clínico</div>
<div class="c r" style="left:731px;top:587px;width:89px;height:21px">12776</div>
<div class="c" style="left:821px;top:587px;width:163px;height:21px">12776 -<span class="s"> </span>TAISA<span class="s"> </span>TOMAZINI MARTINS</div>
<div class="c r" style="left:985px;top:587px;width:69px;height:21px">3</div>
<div class="c" style="left:1055px;top:587px;width:154px;height:21px">CONSULTA<span class="s"> </span>MÉDICA<span class="s"> </span>-<span class="s"> </span>AP</div>
<div class="hl" style="top:607px"></div>
<div class="vl" style="left:118px;top:587px;height:21px"></div>
<div class="vl" style="left:219px;top:587px;height:21px"></div>
<div class="vl" style="left:293px;top:587px;height:21px"></div>
<div class="vl" style="left:394px;top:587px;height:21px"></div>
<div class="vl" style="left:452px;top:587px;height:21px"></div>
<div class="vl" style="left:550px;top:587px;height:21px"></div>
<div class="vl" style="left:651px;top:587px;height:21px"></div>
<div class="vl" style="left:730px;top:587px;height:21px"></div>
<div class="vl" style="left:820px;top:587px;height:21px"></div>
<div class="vl" style="left:984px;top:587px;height:21px"></div>
<div class="vl" style="left:1054px;top:587px;height:21px"></div>
<div class="vl" style="left:1209px;top:587px;height:21px"></div>
<div class="rh" style="top:608px;height:21px">22</div>
<div class="c r" style="left:45px;top:608px;width:73px;height:21px">50</div>
<div class="c" style="left:119px;top:608px;width:100px;height:21px">C S BRIGADEIRO<span class="s"> </span>TOBIAS</div>
<div class="c r" style="left:220px;top:608px;width:73px;height:21px">50</div>
<div class="c" style="left:294px;top:608px;width:100px;height:21px">C S BRIGADEIRO<span class="s"> </span>TOBIAS</div>
<div class="c r" style="left:395px;top:608px;width:57px;height:21px">225142</div>
<div class="c" style="left:453px;top:608px;width:198px;height:21px">Médico da estratégia de saúde da família</div>
<div class="c r" style="left:731px;top:608px;width:89px;height:21px">12562</div>
<div class="c" style="left:821px;top:608px;width:163px;height:21px">12562 - ELIZANGELA<span class="s"> </span>DE<span class="s"> </span>ARAUJO</div>
<div class="c r" style="left:985px;top:608px;width:69px;height:21px">3</div>
<div class="c" style="left:1055px;top:608px;width:154px;height:21px">CONSULTA<span class="s"> </span>MÉDICA<span class="s"> </span>-<span class="s"> </span>AP</div>
<div class="hl" style="top:628px"></div>
<div class="vl" style="left:118px;top:608px;height:21px"></div>
<div class="vl" style="left:219px;top:608px;height:21px"></div>
<div class="vl" style="left:293px;top:608px;height:21px"></div>
<div class="vl" style="left:394px;top:608px;height:21px"></div>
<div class="vl" style="left:452px;top:608px;height:21px"></div>
<div class="vl" style="left:651px;top:608px;height:21px"></div>
<div class="vl" style="left:730px;top:608px;height:21px"></div>
<div class="vl" style="left:820px;top:608px;height:21px"></div>
<div class="vl" style="left:984px;top:608px;height:21px"></div>
<div class="vl" style="left:1054px;top:608px;height:21px"></div>
<div class="vl" style="left:1209px;top:608px;height:21px"></div>
<div class="rh" style="top:629px;height:21px">23</div>
<div class="c r" style="left:45px;top:629px;width:73px;height:21px">50</div>
<div class="c" style="left:119px;top:629px;width:100px;height:21px">C S BRIGADEIRO<span class="s"> </span>TOBIAS</div>
<div class="c r" style="left:220px;top:629px;width:73px;height:21px">50</div>
<div class="c" style="left:294px;top:629px;width:100px;height:21px">C S BRIGADEIRO<span class="s"> </span>TOBIAS</div>
<div class="c r" style="left:395px;top:629px;width:57px;height:21px">225142</div>
<div class="c" style="left:453px;top:629px;width:198px;height:21px">Médico da estratégia de saúde da família</div>
<div class="c r" style="left:731px;top:629px;width:89px;height:21px">12562</div>
<div class="c" style="left:821px;top:629px;width:163px;height:21px">12562 - ELIZANGELA<span class="s"> </span>DE<span class="s"> </span>ARAUJO</div>
<div class="c r" style="left:985px;top:629px;width:69px;height:21px">3</div>
<div class="c" style="left:1055px;top:629px;width:154px;height:21px">CONSULTA<span class="s"> </span>MÉDICA<span class="s"> </span>-<span class="s"> </span>AP</div>
<div class="hl" style="top:649px"></div>
<div class="vl" style="left:118px;top:629px;height:21px"></div>
<div class="vl" style="left:219px;top:629px;height:21px"></div>
<div class="vl" style="left:293px;top:629px;height:21px"></div>
<div class="vl" style="left:394px;top:629px;height:21px"></div>
<div class="vl" style="left:452px;top:629px;height:21px"></div>
<div class="vl" style="left:651px;top:629px;height:21px"></div>
<div class="vl" style="left:730px;top:629px;height:21px"></div>
<div class="vl" style="left:820px;top:629px;height:21px"></div>
<div class="vl" style="left:984px;top:629px;height:21px"></div>
<div class="vl" style="left:1054px;top:629px;height:21px"></div>
<div class="vl" style="left:1209px;top:629px;height:21px"></div>
<div class="rh" style="top:650px;height:21px">24</div>
<div class="c r" style="left:45px;top:650px;width:73px;height:21px">50</div>
<div class="c" style="left:119px;top:650px;width:100px;height:21px">C S BRIGADEIRO<span class="s"> </span>TOBIAS</div>
<div class="c r" style="left:220px;top:650px;width:73px;height:21px">50</div>
<div class="c" style="left:294px;top:650px;width:100px;height:21px">C S BRIGADEIRO<span class="s"> </span>TOBIAS</div>
<div class="c r" style="left:395px;top:650px;width:57px;height:21px">225142</div>
<div class="c" style="left:453px;top:650px;width:198px;height:21px">Médico da estratégia de saúde da família</div>
<div class="c r" style="left:731px;top:650px;width:89px;height:21px">12562</div>
<div class="c" style="left:821px;top:650px;width:163px;height:21px">12562 - ELIZANGELA<span class="s"> </span>DE<span class="s"> </span>ARAUJO</div>
<div class="c r" style="left:985px;top:650px;width:69px;height:21px">3</div>
<div class="c" style="left:1055px;top:650px;width:154px;height:21px">CONSULTA<span class="s"> </span>MÉDICA<span class="s"> </span>-<span class="s"> </span>AP</div>
<div class="hl" style="top:670px"></div>
<div class="vl" style="left:118px;top:650px;height:21px"></div>
<div class="vl" style="left:219px;top:650px;height:21px"></div>
<div class="vl" style="left:293px;top:650px;height:21px"></div>
<div class="vl" style="left:394px;top:650px;height:21px"></div>
<div class="vl" style="left:452px;top:650px;height:21px"></div>
<div class="vl" style="left:651px;top:650px;height:21px"></div>
<div class="vl" style="left:730px;top:650px;height:21px"></div>
<div class="vl" style="left:820px;top:650px;height:21px"></div>
<div class="vl" style="left:984px;top:650px;height:21px"></div>
<div class="vl" style="left:1054px;top:650px;height:21px"></div>
<div class="vl" style="left:1209px;top:650px;height:21px"></div>
<div class="rh" style="top:671px;height:21px">25</div>
<div class="c r" style="left:45px;top:671px;width:73px;height:21px">50</div>
<div class="c" style="left:119px;top:671px;width:100px;height:21px">C S BRIGADEIRO<span class="s"> </span>TOBIAS</div>
<div class="c r" style="left:220px;top:671px;width:73px;height:21px">50</div>
<div class="c" style="left:294px;top:671px;width:100px;height:21px">C S BRIGADEIRO<span class="s"> </span>TOBIAS</div>
<div class="c r" style="left:395px;top:671px;width:57px;height:21px">225142</div>
<div class="c" style="left:453px;top:671px;width:198px;height:21px">Médico da estratégia de saúde da família</div>
<div class="c r" style="left:731px;top:671px;width:89px;height:21px">12562</div>
<div class="c" style="left:821px;top:671px;width:163px;height:21px">12562 - ELIZANGELA<span class="s"> </span>DE<span class="s"> </span>ARAUJO</div>
<div class="c r" style="left:985px;top:671px;width:69px;height:21px">3</div>
<div class="c" style="left:1055px;top:671px;width:154px;height:21px">CONSULTA<span class="s"> </span>MÉDICA<span class="s"> </span>-<span class="s"> </span>AP</div>
<div class="hl" style="top:691px"></div>
<div class="vl" style="left:118px;top:671px;height:21px"></div>
<div class="vl" style="left:219px;top:671px;height:21px"></div>
<div class="vl" style="left:293px;top:671px;height:21px"></div>
<div class="vl" style="left:394px;top:671px;height:21px"></div>
<div class="vl" style="left:452px;top:671px;height:21px"></div>
<div class="vl" style="left:651px;top:671px;height:21px"></div>
<div class="vl" style="left:730px;top:671px;height:21px"></div>
<div class="vl" style="left:820px;top:671px;height:21px"></div>
<div class="vl" style="left:984px;top:671px;height:21px"></div>
<div class="vl" style="left:1054px;top:671px;height:21px"></div>
<div class="vl" style="left:1209px;top:671px;height:21px"></div>
<div class="rh" style="top:692px;height:21px">26</div>
<div class="c r" style="left:45px;top:692px;width:73px;height:21px">50</div>
<div class="c" style="left:119px;top:692px;width:100px;height:21px">C S BRIGADEIRO<span class="s"> </span>TOBIAS</div>
<div class="c r" style="left:220px;top:692px;width:73px;height:21px">50</div>
<div class="c" style="left:294px;top:692px;width:100px;height:21px">C S BRIGADEIRO<span class="s"> </span>TOBIAS</div>
<div class="c r" style="left:395px;top:692px;width:57px;height:21px">225142</div>
<div class="c" style="left:453px;top:692px;width:198px;height:21px">Médico da estratégia de saúde da família</div>
<div class="c r" style="left:731px;top:692px;width:89px;height:21px">12562</div>
<div class="c" style="left:821px;top:692px;width:163px;height:21px">12562 - ELIZANGELA<span class="s"> </span>DE<span class="s"> </span>ARAUJO</div>
<div class="c r" style="left:985px;top:692px;width:69px;height:21px">3</div>
<div class="c" style="left:1055px;top:692px;width:154px;height:21px">CONSULTA<span class="s"> </span>MÉDICA<span class="s"> </span>-<span class="s"> </span>AP</div>
<div class="hl" style="top:712px"></div>
<div class="vl" style="left:118px;top:692px;height:21px"></div>
<div class="vl" style="left:219px;top:692px;height:21px"></div>
<div class="vl" style="left:293px;top:692px;height:21px"></div>
<div class="vl" style="left:394px;top:692px;height:21px"></div>
<div class="vl" style="left:452px;top:692px;height:21px"></div>
<div class="vl" style="left:651px;top:692px;height:21px"></div>
<div class="vl" style="left:730px;top:692px;height:21px"></div>
<div class="vl" style="left:820px;top:692px;height:21px"></div>
<div class="vl" style="left:984px;top:692px;height:21px"></div>
<div class="vl" style="left:1054px;top:692px;height:21px"></div>
<div class="vl" style="left:1209px;top:692px;height:21px"></div>
<div class="rh" style="top:713px;height:21px">27</div>
<div class="c r" style="left:45px;top:713px;width:73px;height:21px">50</div>
<div class="c" style="left:119px;top:713px;width:100px;height:21px">C S BRIGADEIRO<span class="s"> </span>TOBIAS</div>
<div class="c r" style="left:220px;top:713px;width:73px;height:21px">50</div>
<div class="c" style="left:294px;top:713px;width:100px;height:21px">C S BRIGADEIRO<span class="s"> </span>TOBIAS</div>
<div class="c r" style="left:395px;top:713px;width:57px;height:21px">225142</div>
<div class="c" style="left:453px;top:713px;width:198px;height:21px">Médico da estratégia de saúde da família</div>
<div class="c r" style="left:731px;top:713px;width:89px;height:21px">12562</div>
<div class="c" style="left:821px;top:713px;width:163px;height:21px">12562 - ELIZANGELA<span class="s"> </span>DE<span class="s"> </span>ARAUJO</div>
<div class="c r" style="left:985px;top:713px;width:69px;height:21px">3</div>
<div class="c" style="left:1055px;top:713px;width:154px;height:21px">CONSULTA<span class="s"> </span>MÉDICA<span class="s"> </span>-<span class="s"> </span>AP</div>
<div class="hl" style="top:733px"></div>
<div class="vl" style="left:118px;top:713px;height:21px"></div>
<div class="vl" style="left:219px;top:713px;height:21px"></div>
<div class="vl" style="left:293px;top:713px;height:21px"></div>
<div class="vl" style="left:394px;top:713px;height:21px"></div>
<div class="vl" style="left:452px;top:713px;height:21px"></div>
<div class="vl" style="left:651px;top:713px;height:21px"></div>
<div class="vl" style="left:730px;top:713px;height:21px"></div>
<div class="vl" style="left:820px;top:713px;height:21px"></div>
<div class="vl" style="left:984px;top:713px;height:21px"></div>
<div class="vl" style="left:1054px;top:713px;height:21px"></div>
<div class="vl" style="left:1209px;top:713px;height:21px"></div>
<div class="rh" style="top:734px;height:21px">28</div>
<div class="c r" style="left:45px;top:734px;width:73px;height:21px">50</div>
<div class="c" style="left:119px;top:734px;width:100px;height:21px">C S BRIGADEIRO<span class="s"> </span>TOBIAS</div>
<div class="c r" style="left:220px;top:734px;width:73px;height:21px">50</div>
<div class="c" style="left:294px;top:734px;width:100px;height:21px">C S BRIGADEIRO<span class="s"> </span>TOBIAS</div>
<div class="c r" style="left:395px;top:734px;width:57px;height:21px">225142</div>
<div class="c" style="left:453px;top:734px;width:198px;height:21px">Médico da estratégia de saúde da família</div>
<div class="c r" style="left:731px;top:734px;width:89px;height:21px">12562</div>
<div class="c" style="left:821px;top:734px;width:163px;height:21px">12562 - ELIZANGELA<span class="s"> </span>DE<span class="s"> </span>ARAUJO</div>
<div class="c r" style="left:985px;top:734px;width:69px;height:21px">3</div>
<div class="c" style="left:1055px;top:734px;width:154px;height:21px">CONSULTA<span class="s"> </span>MÉDICA<span class="s"> </span>-<span class="s"> </span>AP</div>
<div class="hl" style="top:754px"></div>
<div class="vl" style="left:118px;top:734px;height:21px"></div>
<div class="vl" style="left:219px;top:734px;height:21px"></div>
<div class="vl" style="left:293px;top:734px;height:21px"></div>
<div class="vl" style="left:394px;top:734px;height:21px"></div>
<div class="vl" style="left:452px;top:734px;height:21px"></div>
<div class="vl" style="left:651px;top:734px;height:21px"></div>
<div class="vl" style="left:730px;top:734px;height:21px"></div>
<div class="vl" style="left:820px;top:734px;height:21px"></div>
<div class="vl" style="left:984px;top:734px;height:21px"></div>
<div class="vl" style="left:1054px;top:734px;height:21px"></div>
<div class="vl" style="left:1209px;top:734px;height:21px"></div>
<div class="rh" style="top:755px;height:21px">29</div>
<div class="c r" style="left:45px;top:755px;width:73px;height:21px">50</div>
<div class="c" style="left:119px;top:755px;width:100px;height:21px">C S BRIGADEIRO<span class="s"> </span>TOBIAS</div>
<div class="c r" style="left:220px;top:755px;width:73px;height:21px">50</div>
<div class="c" style="left:294px;top:755px;width:100px;height:21px">C S BRIGADEIRO<span class="s"> </span>TOBIAS</div>
<div class="c r" style="left:395px;top:755px;width:57px;height:21px">225142</div>
<div class="c" style="left:453px;top:755px;width:198px;height:21px">Médico da estratégia de saúde da família</div>
<div class="c r" style="left:731px;top:755px;width:89px;height:21px">12562</div>
<div class="c" style="left:821px;top:755px;width:163px;height:21px">12562 - ELIZANGELA<span class="s"> </span>DE<span class="s"> </span>ARAUJO</div>
<div class="c r" style="left:985px;top:755px;width:69px;height:21px">3</div>
<div class="c" style="left:1055px;top:755px;width:154px;height:21px">CONSULTA<span class="s"> </span>MÉDICA<span class="s"> </span>-<span class="s"> </span>AP</div>
<div class="hl" style="top:775px"></div>
<div class="vl" style="left:118px;top:755px;height:21px"></div>
<div class="vl" style="left:219px;top:755px;height:21px"></div>
<div class="vl" style="left:293px;top:755px;height:21px"></div>
<div class="vl" style="left:394px;top:755px;height:21px"></div>
<div class="vl" style="left:452px;top:755px;height:21px"></div>
<div class="vl" style="left:651px;top:755px;height:21px"></div>
<div class="vl" style="left:730px;top:755px;height:21px"></div>
<div class="vl" style="left:820px;top:755px;height:21px"></div>
<div class="vl" style="left:984px;top:755px;height:21px"></div>
<div class="vl" style="left:1054px;top:755px;height:21px"></div>
<div class="vl" style="left:1209px;top:755px;height:21px"></div>
<div class="rh" style="top:776px;height:21px">30</div>
<div class="c r" style="left:45px;top:776px;width:73px;height:21px">50</div>
<div class="c" style="left:119px;top:776px;width:100px;height:21px">C S BRIGADEIRO<span class="s"> </span>TOBIAS</div>
<div class="c r" style="left:220px;top:776px;width:73px;height:21px">50</div>
<div class="c" style="left:294px;top:776px;width:100px;height:21px">C S BRIGADEIRO<span class="s"> </span>TOBIAS</div>
<div class="c r" style="left:395px;top:776px;width:57px;height:21px">225142</div>
<div class="c" style="left:453px;top:776px;width:198px;height:21px">Médico da estratégia de saúde da família</div>
<div class="c r" style="left:731px;top:776px;width:89px;height:21px">12562</div>
<div class="c" style="left:821px;top:776px;width:163px;height:21px">12562 - ELIZANGELA<span class="s"> </span>DE<span class="s"> </span>ARAUJO</div>
<div class="c r" style="left:985px;top:776px;width:69px;height:21px">3</div>
<div class="c" style="left:1055px;top:776px;width:154px;height:21px">CONSULTA<span class="s"> </span>MÉDICA<span class="s"> </span>-<span class="s"> </span>AP</div>
<div class="hl" style="top:796px"></div>
<div class="vl" style="left:118px;top:776px;height:21px"></div>
<div class="vl" style="left:219px;top:776px;height:21px"></div>
<div class="vl" style="left:293px;top:776px;height:21px"></div>
<div class="vl" style="left:394px;top:776px;height:21px"></div>
<div class="vl" style="left:452px;top:776px;height:21px"></div>
<div class="vl" style="left:651px;top:776px;height:21px"></div>
<div class="vl" style="left:730px;top:776px;height:21px"></div>
<div class="vl" style="left:820px;top:776px;height:21px"></div>
<div class="vl" style="left:984px;top:776px;height:21px"></div>
<div class="vl" style="left:1054px;top:776px;height:21px"></div>
<div class="vl" style="left:1209px;top:776px;height:21px"></div>
<div class="rh" style="top:797px;height:21px">31</div>
<div class="c r" style="left:45px;top:797px;width:73px;height:21px">50</div>
<div class="c" style="left:119px;top:797px;width:100px;height:21px">C S BRIGADEIRO<span class="s"> </span>TOBIAS</div>
<div class="c r" style="left:220px;top:797px;width:73px;height:21px">50</div>
<div class="c" style="left:294px;top:797px;width:100px;height:21px">C S BRIGADEIRO<span class="s"> </span>TOBIAS</div>
<div class="c r" style="left:395px;top:797px;width:57px;height:21px">225142</div>
<div class="c" style="left:453px;top:797px;width:198px;height:21px">Médico da estratégia de saúde da família</div>
<div class="c r" style="left:731px;top:797px;width:89px;height:21px">12562</div>
<div class="c" style="left:821px;top:797px;width:163px;height:21px">12562 - ELIZANGELA<span class="s"> </span>DE<span class="s"> </span>ARAUJO</div>
<div class="c r" style="left:985px;top:797px;width:69px;height:21px">3</div>
<div class="c" style="left:1055px;top:797px;width:154px;height:21px">CONSULTA<span class="s"> </span>MÉDICA<span class="s"> </span>-<span class="s"> </span>AP</div>
<div class="hl" style="top:817px"></div>
<div class="vl" style="left:118px;top:797px;height:21px"></div>
<div class="vl" style="left:219px;top:797px;height:21px"></div>
<div class="vl" style="left:293px;top:797px;height:21px"></div>
<div class="vl" style="left:394px;top:797px;height:21px"></div>
<div class="vl" style="left:452px;top:797px;height:21px"></div>
<div class="vl" style="left:651px;top:797px;height:21px"></div>
<div class="vl" style="left:730px;top:797px;height:21px"></div>
<div class="vl" style="left:820px;top:797px;height:21px"></div>
<div class="vl" style="left:984px;top:797px;height:21px"></div>
<div class="vl" style="left:1054px;top:797px;height:21px"></div>
<div class="vl" style="left:1209px;top:797px;height:21px"></div>
<div class="rh" style="top:818px;height:21px">32</div>
<div class="c r" style="left:45px;top:818px;width:73px;height:21px">50</div>
<div class="c" style="left:119px;top:818px;width:100px;height:21px">C S BRIGADEIRO<span class="s"> </span>TOBIAS</div>
<div class="c r" style="left:220px;top:818px;width:73px;height:21px">50</div>
<div class="c" style="left:294px;top:818px;width:100px;height:21px">C S BRIGADEIRO<span class="s"> </span>TOBIAS</div>
<div class="c r" style="left:395px;top:818px;width:57px;height:21px">225142</div>
<div class="c" style="left:453px;top:818px;width:198px;height:21px">Médico da estratégia de saúde da família</div>
<div class="c r" style="left:731px;top:818px;width:89px;height:21px">12562</div>
<div class="c" style="left:821px;top:818px;width:163px;height:21px">12562 - ELIZANGELA<span class="s"> </span>DE<span class="s"> </span>ARAUJO</div>
<div class="c r" style="left:985px;top:818px;width:69px;height:21px">3</div>
<div class="c" style="left:1055px;top:818px;width:154px;height:21px">CONSULTA<span class="s"> </span>MÉDICA<span class="s"> </span>-<span class="s"> </span>AP</div>
<div class="hl" style="top:838px"></div>
<div class="vl" style="left:118px;top:818px;height:21px"></div>
<div class="vl" style="left:219px;top:818px;height:21px"></div>
<div class="vl" style="left:293px;top:818px;height:21px"></div>
<div class="vl" style="left:394px;top:818px;height:21px"></div>
<div class="vl" style="left:452px;top:818px;height:21px"></div>
<div class="vl" style="left:651px;top:818px;height:21px"></div>
<div class="vl" style="left:730px;top:818px;height:21px"></div>
<div class="vl" style="left:820px;top:818px;height:21px"></div>
<div class="vl" style="left:984px;top:818px;height:21px"></div>
<div class="vl" style="left:1054px;top:818px;height:21px"></div>
<div class="vl" style="left:1209px;top:818px;height:21px"></div>
<div class="rh" style="top:839px;height:21px">33</div>
<div class="c r" style="left:45px;top:839px;width:73px;height:21px">50</div>
<div class="c" style="left:119px;top:839px;width:100px;height:21px">C S BRIGADEIRO<span class="s"> </span>TOBIAS</div>
<div class="c r" style="left:220px;top:839px;width:73px;height:21px">50</div>
<div class="c" style="left:294px;top:839px;width:100px;height:21px">C S BRIGADEIRO<span class="s"> </span>TOBIAS</div>
<div class="c r" style="left:395px;top:839px;width:57px;height:21px">225142</div>
<div class="c" style="left:453px;top:839px;width:198px;height:21px">Médico da estratégia de saúde da família</div>
<div class="c r" style="left:731px;top:839px;width:89px;height:21px">12562</div>
<div class="c" style="left:821px;top:839px;width:163px;height:21px">12562 - ELIZANGELA<span class="s"> </span>DE<span class="s"> </span>ARAUJO</div>
<div class="c r" style="left:985px;top:839px;width:69px;height:21px">3</div>
<div class="c" style="left:1055px;top:839px;width:154px;height:21px">CONSULTA<span class="s"> </span>MÉDICA<span class="s"> </span>-<span class="s"> </span>AP</div>
<div class="hl" style="top:859px"></div>
<div class="vl" style="left:118px;top:839px;height:21px"></div>
<div class="vl" style="left:219px;top:839px;height:21px"></div>
<div class="vl" style="left:293px;top:839px;height:21px"></div>
<div class="vl" style="left:394px;top:839px;height:21px"></div>
<div class="vl" style="left:452px;top:839px;height:21px"></div>
<div class="vl" style="left:651px;top:839px;height:21px"></div>
<div class="vl" style="left:730px;top:839px;height:21px"></div>
<div class="vl" style="left:820px;top:839px;height:21px"></div>
<div class="vl" style="left:984px;top:839px;height:21px"></div>
<div class="vl" style="left:1054px;top:839px;height:21px"></div>
<div class="vl" style="left:1209px;top:839px;height:21px"></div>
<!-- ===== grid chrome ===== -->
<!-- top border of grid -->
<div class="abs" style="left:0;top:138px;width:1221px;height:1px;background:#c0c0c0"></div>
<!-- corner -->
<div class="abs" style="left:0;top:139px;width:40px;height:23px;background:#f8f9fa"></div>
<div class="abs" style="left:0;top:162px;width:45px;height:1px;background:#c4c7c5"></div>
<div class="abs" style="left:40px;top:139px;width:5px;height:24px;background:#c4c7c5"></div>
<!-- horizontal freeze bar -->
<div class="abs" style="left:0;top:184px;width:1209px;height:4px;background:#c7c7c7"></div>
<!-- right of grid / vertical scrollbar track -->
<div class="abs" style="left:1210px;top:139px;width:11px;height:45px;background:#f8f8f8"></div>
<div class="abs" style="left:1210px;top:184px;width:11px;height:4px;background:#dfe3ec"></div>
<div class="abs" style="left:1210px;top:188px;width:11px;height:637px;background:#fff"></div>
<div class="abs" style="left:1211px;top:189px;width:9px;height:26px;border-radius:4.500px;background:#dadce0"></div>
<!-- v scroll arrow buttons -->
<div class="abs" style="left:1210px;top:825px;width:11px;height:16px;background:#f8f9fa;border-top:1px solid #e3e3e3"></div>
<div class="abs" style="left:1210px;top:841px;width:11px;height:16px;background:#f8f9fa;border-top:1px solid #e3e3e3"></div>
<svg style="left:1212.900px;top:831.200px" width="5.200" height="3.200" viewBox="0 0 7 4"><path d="M0 4h7L3.500 0z" fill="#9aa0a6"/></svg>
<svg style="left:1212.900px;top:847.800px" width="5.200" height="3.200" viewBox="0 0 7 4"><path d="M0 0h7L3.500 4z" fill="#9aa0a6"/></svg>
<!-- horizontal scrollbar area -->
<div class="abs" style="left:0;top:857px;width:1221px;height:13px;background:#fff"></div>
<div class="abs" style="left:0;top:857px;width:45px;height:13px;background:#f8f9fa;border-right:1px solid #d9d9d9"></div>
<div class="abs" style="left:47px;top:859px;width:185px;height:8.500px;border-radius:4.250px;background:#dadce0"></div>
<div class="abs" style="left:1178px;top:857px;width:16px;height:13px;background:#f8f9fa;border-left:1px solid #e3e3e3;border-top:1px solid #e3e3e3"></div>
<div class="abs" style="left:1194px;top:857px;width:15px;height:13px;background:#f8f9fa;border-left:1px solid #e3e3e3;border-top:1px solid #e3e3e3"></div>
<div class="abs" style="left:1210px;top:857px;width:11px;height:13px;background:#f8f9fa;border-top:1px solid #e3e3e3"></div>
<svg style="left:1184px;top:861px" width="3.300" height="5.200" viewBox="0 0 4 7"><path d="M4 0v7L0 3.500z" fill="#9aa0a6"/></svg>
<svg style="left:1200.900px;top:861px" width="3.300" height="5.200" viewBox="0 0 4 7"><path d="M0 0v7l4-3.500z" fill="#9aa0a6"/></svg>
<!-- right border of the grid -->
<div class="abs" style="left:1209px;top:139px;width:1px;height:731px;background:#d9dadc"></div>
<!-- active cell A1 -->
<div class="abs" style="left:45px;top:162px;width:74px;height:22px;border:2px solid #1a73e8;border-left-width:1px"><div style="width:100%;height:100%;border:1px solid rgba(255,255,255,0.45)"></div></div>
<!-- red annotation arrow -->
<svg style="left:0;top:0" width="1274" height="908" viewBox="0 0 1274 908">
  <line x1="445.500" y1="767" x2="340" y2="846.500" stroke="#e21d25" stroke-width="3.800" stroke-linecap="round"/>
  <path d="M328.500 855.500L338.700 836.500L348.900 851.400Z" fill="#e21d25"/>
</svg>

<!-- ===== bottom sheet bar ===== -->
<div id="bb"></div>
<div class="abs" style="left:0;top:904px;width:1274px;height:4px;background:#fff"></div>
<!-- add sheet + -->
<div class="abs" style="left:56px;top:889.250px;width:10px;height:1.500px;background:#444746"></div>
<div class="abs" style="left:60.250px;top:885px;width:1.500px;height:10px;background:#444746"></div>
<!-- all sheets -->
<div class="abs" style="left:94px;top:885.800px;width:14px;height:1.500px;background:#444746;box-shadow:0 4px 0 #444746,0 8px 0 #444746"></div>
<!-- active tab -->
<div class="abs" style="left:131px;top:867px;width:218px;height:41px;background:#e1e9f7;border:4px solid #e21d25"></div>
<div class="tab" style="left:145px;color:#0b57d0;font-weight:bold;font-size:14px;letter-spacing:0.330px">COLE A PLANILHA AQUI</div>
<svg style="left:327px;top:888px" width="9" height="5" viewBox="0 0 10 5"><path d="M0 0h10L5 5z" fill="#0b57d0"/></svg>
<!-- tab 2 -->
<svg style="left:362.500px;top:881.800px" width="13" height="17" viewBox="0 0 13 17"><path d="M6.500 0.800a3.600 3.600 0 0 0-3.600 3.600V6.200H2A1.600 1.600 0 0 0 .4 7.800v7.400A1.600 1.600 0 0 0 2 16.800h9a1.600 1.600 0 0 0 1.600-1.600V7.800A1.600 1.600 0 0 0 11 6.200h-.9V4.400A3.600 3.600 0 0 0 6.500.8zm0 1.600a2 2 0 0 1 2 2V6.200h-4V4.400a2 2 0 0 1 2-2zm0 7.600a1.500 1.500 0 1 1 0 3 1.500 1.500 0 0 1 0-3z" fill="#444746" fill-rule="evenodd"/></svg>
<div class="tab" style="left:381px">Lembrete de Consulta</div>
<svg style="left:544px;top:888px" width="9" height="5" viewBox="0 0 10 5"><path d="M0 0h10L5 5z" fill="#444746"/></svg>
<!-- tab 3 -->
<svg style="left:579.500px;top:881.800px" width="13" height="17" viewBox="0 0 13 17"><path d="M6.500 0.800a3.600 3.600 0 0 0-3.600 3.600V6.200H2A1.600 1.600 0 0 0 .4 7.800v7.400A1.600 1.600 0 0 0 2 16.800h9a1.600 1.600 0 0 0 1.600-1.600V7.800A1.600 1.600 0 0 0 11 6.200h-.9V4.400A3.600 3.600 0 0 0 6.500.8zm0 1.600a2 2 0 0 1 2 2V6.200h-4V4.400a2 2 0 0 1 2-2zm0 7.600a1.500 1.500 0 1 1 0 3 1.500 1.500 0 0 1 0-3z" fill="#444746" fill-rule="evenodd"/></svg>
<div class="tab" style="left:599px">Remaneja (a realizar)</div>
<svg style="left:756px;top:888px" width="9" height="5" viewBox="0 0 10 5"><path d="M0 0h10L5 5z" fill="#444746"/></svg>
<!-- tab 4 (clipped) -->
<svg style="left:791.500px;top:881.800px" width="13" height="17" viewBox="0 0 13 17"><path d="M6.500 0.800a3.600 3.600 0 0 0-3.600 3.600V6.200H2A1.600 1.600 0 0 0 .4 7.800v7.400A1.600 1.600 0 0 0 2 16.800h9a1.600 1.600 0 0 0 1.600-1.600V7.800A1.600 1.600 0 0 0 11 6.200h-.9V4.400A3.600 3.600 0 0 0 6.500.8zm0 1.600a2 2 0 0 1 2 2V6.200h-4V4.400a2 2 0 0 1 2-2zm0 7.600a1.500 1.500 0 1 1 0 3 1.500 1.500 0 0 1 0-3z" fill="#444746" fill-rule="evenodd"/></svg>
<div class="tab" style="left:811px;width:78px;overflow:hidden">Remanejamento</div>
<div class="abs" style="left:889px;top:879px;width:1px;height:20px;background:#c4c7c5"></div>
<!-- scroll tabs chevrons -->
<svg style="left:908px;top:884px" width="8" height="12" viewBox="0 0 8 12"><path d="M6.500 1L1.500 6l5 5" fill="none" stroke="#c4c7c5" stroke-width="1.600"/></svg>
<svg style="left:948px;top:884px" width="8" height="12" viewBox="0 0 8 12"><path d="M1.500 1l5 5-5 5" fill="none" stroke="#444746" stroke-width="1.600"/></svg>
<!-- count chip -->
<div class="abs" style="left:1060px;top:874px;width:150px;height:30px;border-radius:8px;background:#c4eed0"></div>
<div class="abs" style="left:1072px;top:879px;font-size:15px;line-height:20px;color:#072711;white-space:nowrap;letter-spacing:-0.400px;-webkit-text-stroke:0.200px #072711">Contagem: 3.978</div>
<svg style="left:1189.400px;top:887.300px" width="8" height="4.200" viewBox="0 0 10 5"><path d="M0 0h10L5 5z" fill="#072711"/></svg>

</div></body></html>
